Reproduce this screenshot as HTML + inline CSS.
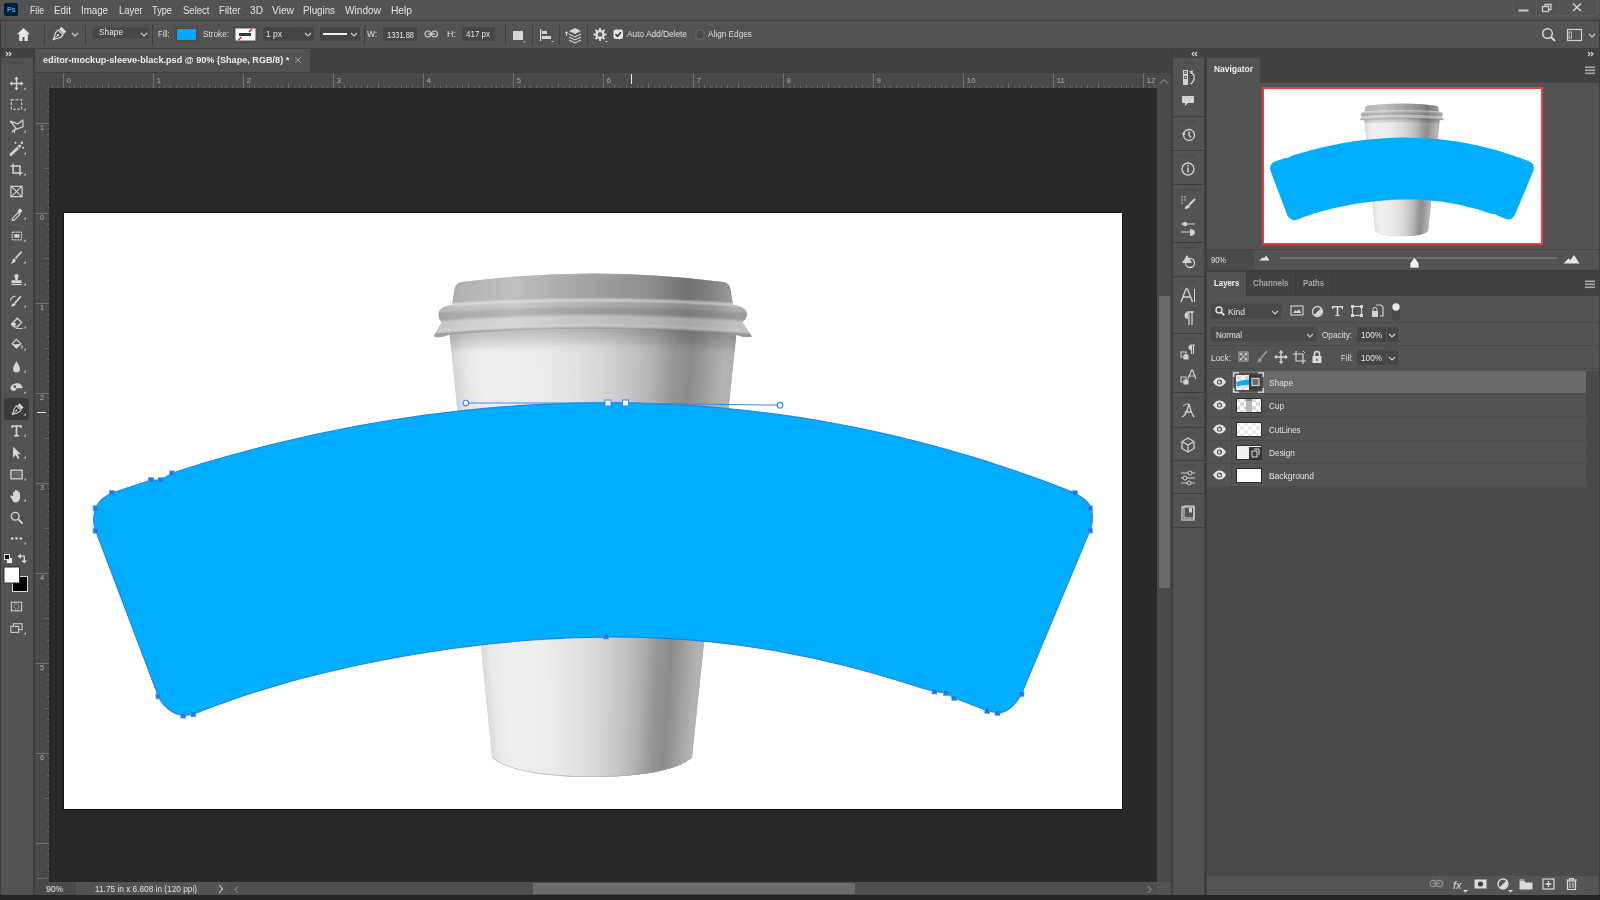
<!DOCTYPE html>
<html><head><meta charset="utf-8">
<style>
*{margin:0;padding:0;box-sizing:border-box}
html,body{width:1600px;height:900px;overflow:hidden;background:#3e3e3e;font-family:"Liberation Sans",sans-serif}
.a{position:absolute}
.t{position:absolute;white-space:nowrap;line-height:1;transform-origin:0 0}
</style></head><body>
<div class="a" style="left:0px;top:0px;width:1600px;height:20px;background:#535353;"></div>
<div class="a" style="left:1px;top:21px;width:1598px;height:27px;background:#535353;"></div>
<div class="a" style="left:1px;top:49px;width:32px;height:9px;background:#424242;"></div>
<div class="a" style="left:1px;top:58px;width:32px;height:837px;background:#535353;"></div>
<div class="a" style="left:35px;top:49px;width:1136px;height:23px;background:#424242;"></div>
<div class="a" style="left:35px;top:49px;width:275px;height:23px;background:#535353;"></div>
<div class="a" style="left:35px;top:73px;width:1122px;height:15px;background:#494949;"></div>
<div class="a" style="left:35px;top:88px;width:14px;height:794px;background:#494949;"></div>
<div class="a" style="left:49px;top:88px;width:1108px;height:794px;background:#282828;"></div>
<div class="a" style="left:1157px;top:73px;width:14px;height:809px;background:#4a4a4a;"></div>
<div class="a" style="left:1159px;top:296px;width:11px;height:292px;background:#6a6a6a;"></div>
<div class="a" style="left:35px;top:882px;width:1136px;height:13px;background:#535353;"></div>
<div class="a" style="left:35px;top:882px;width:41px;height:13px;background:#4a4a4a;"></div>
<div class="a" style="left:228px;top:882px;width:929px;height:13px;background:#4e4e4e;"></div>
<div class="a" style="left:533px;top:883px;width:322px;height:11px;background:#6b6b6b;"></div>
<div class="a" style="left:0px;top:895px;width:1600px;height:5px;background:#242424;"></div>
<div class="a" style="left:1173px;top:49px;width:426px;height:9px;background:#424242;"></div>
<div class="a" style="left:1173px;top:58px;width:31px;height:837px;background:#535353;"></div>
<div class="a" style="left:1207px;top:58px;width:392px;height:25px;background:#424242;"></div>
<div class="a" style="left:1207px;top:58px;width:53px;height:25px;background:#535353;"></div>
<div class="a" style="left:1207px;top:83px;width:392px;height:166px;background:#535353;"></div>
<div class="a" style="left:1207px;top:250px;width:392px;height:20px;background:#535353;"></div>
<div class="a" style="left:1207px;top:250px;width:47px;height:20px;background:#4a4a4a;"></div>
<div class="a" style="left:1207px;top:272px;width:392px;height:24px;background:#424242;"></div>
<div class="a" style="left:1207px;top:272px;width:39px;height:24px;background:#535353;"></div>
<div class="a" style="left:1207px;top:296px;width:392px;height:75px;background:#535353;"></div>
<div class="a" style="left:1207px;top:371px;width:392px;height:505px;background:#4a4a4a;"></div>
<div class="a" style="left:1207px;top:876px;width:392px;height:19px;background:#555555;"></div>
<div class="a" style="left:4px;top:3px;width:14px;height:13px;background:#001e36;border-radius:2px"></div>
<span id="t0" class="t" style="left:6.6px;top:6.45px;font-size:7.5px;color:#31a8ff;font-weight:bold;transform:scaleX(0.9578);">Ps</span>
<span id="t1" class="t" style="left:29.8px;top:4.61px;font-size:10.5px;color:#e4e4e4;transform:scaleX(0.8273);">File</span>
<span id="t2" class="t" style="left:54px;top:4.61px;font-size:10.5px;color:#e4e4e4;transform:scaleX(0.9396);">Edit</span>
<span id="t3" class="t" style="left:81px;top:4.61px;font-size:10.5px;color:#e4e4e4;transform:scaleX(0.9251);">Image</span>
<span id="t4" class="t" style="left:118.5px;top:4.61px;font-size:10.5px;color:#e4e4e4;transform:scaleX(0.8947);">Layer</span>
<span id="t5" class="t" style="left:152px;top:4.61px;font-size:10.5px;color:#e4e4e4;transform:scaleX(0.8785);">Type</span>
<span id="t6" class="t" style="left:182.5px;top:4.61px;font-size:10.5px;color:#e4e4e4;transform:scaleX(0.9079);">Select</span>
<span id="t7" class="t" style="left:218.5px;top:4.61px;font-size:10.5px;color:#e4e4e4;transform:scaleX(0.9210);">Filter</span>
<span id="t8" class="t" style="left:249.5px;top:4.61px;font-size:10.5px;color:#e4e4e4;transform:scaleX(0.9674);">3D</span>
<span id="t9" class="t" style="left:272px;top:4.61px;font-size:10.5px;color:#e4e4e4;transform:scaleX(0.9744);">View</span>
<span id="t10" class="t" style="left:303px;top:4.61px;font-size:10.5px;color:#e4e4e4;transform:scaleX(0.9288);">Plugins</span>
<span id="t11" class="t" style="left:345px;top:4.61px;font-size:10.5px;color:#e4e4e4;transform:scaleX(0.9636);">Window</span>
<span id="t12" class="t" style="left:391px;top:4.61px;font-size:10.5px;color:#e4e4e4;transform:scaleX(0.9718);">Help</span>
<svg class="a" style="left:1512px;top:0px;" width="88" height="18" viewBox="0 0 88 18"><rect x="1.5" y="-2" width="84" height="17.5" rx="2" fill="none" stroke="#5c5c5c"/><line x1="24.5" y1="0" x2="24.5" y2="15" stroke="#5c5c5c"/><line x1="46.5" y1="0" x2="46.5" y2="15" stroke="#5c5c5c"/><rect x="6.5" y="9.5" width="10" height="2" fill="#cfcfcf"/><rect x="30.5" y="6.5" width="6" height="5" fill="none" stroke="#cfcfcf" stroke-width="1.3"/><path d="M33 6.5V4.5h6v5h-2.2" fill="none" stroke="#cfcfcf" stroke-width="1.3"/><path d="M61 3.5l8 7.5M69 3.5l-8 7.5" stroke="#cfcfcf" stroke-width="1.6"/></svg>
<div class="a" style="left:1599px;top:21px;width:1px;height:27px;background:#3b3b3b;"></div>
<div class="a" style="left:0px;top:21px;width:1px;height:874px;background:#3b3b3b;"></div>
<svg class="a" style="left:4px;top:25px;" width="3" height="20" viewBox="0 0 3 20"><rect x="1" y="0" width="1" height="1" fill="#3f3f3f"/><rect x="1" y="2" width="1" height="1" fill="#3f3f3f"/><rect x="1" y="4" width="1" height="1" fill="#3f3f3f"/><rect x="1" y="6" width="1" height="1" fill="#3f3f3f"/><rect x="1" y="8" width="1" height="1" fill="#3f3f3f"/><rect x="1" y="10" width="1" height="1" fill="#3f3f3f"/><rect x="1" y="12" width="1" height="1" fill="#3f3f3f"/><rect x="1" y="14" width="1" height="1" fill="#3f3f3f"/><rect x="1" y="16" width="1" height="1" fill="#3f3f3f"/><rect x="1" y="18" width="1" height="1" fill="#3f3f3f"/></svg>
<svg class="a" style="left:16px;top:27px;" width="15" height="15" viewBox="0 0 15 15"><path d="M7.5 1L1 7.3h2.2V14h3.3V10h2V14h3.3V7.3H14z" fill="#e8e8e8"/></svg>
<div class="a" style="left:44px;top:25px;width:1px;height:20px;background:#3e3e3e;"></div>
<div class="a" style="left:85px;top:25px;width:1px;height:20px;background:#3e3e3e;"></div>
<div class="a" style="left:152px;top:25px;width:1px;height:20px;background:#3e3e3e;"></div>
<svg class="a" style="left:50px;top:26px;" width="17" height="17" viewBox="0 0 17 17"><g transform="translate(8.5 8.5) rotate(45)"><path d="M0 7.5C-1 4.5-3.6 1.8-3.6-0.8V-3H3.6V-0.8C3.6 1.8 1 4.5 0 7.5Z" fill="none" stroke="#dcdcdc" stroke-width="1.2" stroke-linejoin="round"/><path d="M0 7.5V1.5" stroke="#dcdcdc" stroke-width="0.9"/><circle cx="0" cy="0.8" r="1.1" fill="#dcdcdc"/><rect x="-3.3" y="-7.5" width="6.6" height="3.4" fill="#dcdcdc"/></g></svg>
<svg class="a" style="left:71px;top:32px;" width="8" height="5" viewBox="0 0 8 5"><path d="M1 1l3.0 3l3.0 -3" fill="none" stroke="#cfcfcf" stroke-width="1.1"/></svg>
<div class="a" style="left:92px;top:27px;width:58px;height:12px;background:#474747;border:1px solid #4d4d4d;border-radius:2px"></div>
<span id="t13" class="t" style="left:99px;top:28.35px;font-size:8.8px;color:#e6e6e6;transform:scaleX(0.9435);">Shape</span>
<svg class="a" style="left:140px;top:31.5px;" width="8" height="5" viewBox="0 0 8 5"><path d="M1 1l3.0 3l3.0 -3" fill="none" stroke="#cfcfcf" stroke-width="1.1"/></svg>
<span id="t14" class="t" style="left:158.4px;top:30.47px;font-size:8.3px;color:#dedede;transform:scaleX(0.8988);">Fill:</span>
<div class="a" style="left:174px;top:26px;width:25px;height:17px;background:none;border:1px solid #4a4a4a"></div>
<div class="a" style="left:176px;top:28px;width:21px;height:13px;background:#00aaff;border:1px solid #5a4038"></div>
<span id="t15" class="t" style="left:203px;top:30.47px;font-size:8.3px;color:#dedede;transform:scaleX(0.9887);">Stroke:</span>
<div class="a" style="left:233px;top:26px;width:25px;height:17px;background:none;border:1px solid #4a4a4a"></div>
<svg class="a" style="left:235px;top:28px;" width="21" height="13" viewBox="0 0 21 13"><rect x="0" y="0" width="21" height="13" fill="#fff" stroke="#5a4038"/><rect x="4" y="5" width="12" height="3" fill="#383838"/><path d="M14 4l3-3M3.5 12l3-3" stroke="#e8262b" stroke-width="1.6"/></svg>
<div class="a" style="left:263px;top:27px;width:39px;height:14px;background:#454545;border-radius:2px"></div>
<div class="a" style="left:302px;top:27px;width:12px;height:14px;background:#454545;border-radius:1px"></div>
<span id="t16" class="t" style="left:266px;top:30.35px;font-size:8.8px;color:#e6e6e6;transform:scaleX(0.9615);">1 px</span>
<svg class="a" style="left:304px;top:32px;" width="8" height="5" viewBox="0 0 8 5"><path d="M1 1l3.0 3l3.0 -3" fill="none" stroke="#cfcfcf" stroke-width="1.1"/></svg>
<div class="a" style="left:320px;top:27px;width:40px;height:14px;background:#454545;border-radius:2px"></div>
<div class="a" style="left:323px;top:33px;width:24px;height:2px;background:#f0f0f0;"></div>
<svg class="a" style="left:350px;top:31.5px;" width="8" height="5" viewBox="0 0 8 5"><path d="M1 1l3.0 3l3.0 -3" fill="none" stroke="#cfcfcf" stroke-width="1.1"/></svg>
<div class="a" style="left:364px;top:25px;width:1px;height:20px;background:#3e3e3e;"></div>
<span id="t17" class="t" style="left:367px;top:30.47px;font-size:8.3px;color:#dedede;">W:</span>
<div class="a" style="left:383px;top:27px;width:34px;height:14px;background:#454545;border-radius:2px"></div>
<span id="t18" class="t" style="left:387px;top:30.60px;font-size:8.5px;color:#e6e6e6;transform:scaleX(0.8785);">1331.88</span>
<svg class="a" style="left:424px;top:30px;" width="15" height="8" viewBox="0 0 15 8"><rect x="1" y="1" width="6" height="6" rx="3" fill="none" stroke="#d0d0d0" stroke-width="1.2"/><rect x="7.5" y="1" width="6" height="6" rx="3" fill="none" stroke="#d0d0d0" stroke-width="1.2"/><line x1="4" y1="4" x2="11" y2="4" stroke="#d0d0d0" stroke-width="1.2"/></svg>
<span id="t19" class="t" style="left:447px;top:30.47px;font-size:8.3px;color:#dedede;transform:scaleX(1.0827);">H:</span>
<div class="a" style="left:462px;top:27px;width:33px;height:14px;background:#454545;border-radius:2px"></div>
<span id="t20" class="t" style="left:466px;top:30.35px;font-size:8.8px;color:#e6e6e6;transform:scaleX(0.9083);">417 px</span>
<div class="a" style="left:505px;top:25px;width:1px;height:20px;background:#3e3e3e;"></div>
<svg class="a" style="left:511px;top:29px;" width="16" height="14" viewBox="0 0 16 14"><rect x="2" y="2" width="10" height="9" fill="#d6d6d6"/><path d="M12 12.5h3l-1.5 1.3z" fill="#d6d6d6"/></svg>
<div class="a" style="left:532px;top:25px;width:1px;height:20px;background:#3e3e3e;"></div>
<svg class="a" style="left:538px;top:28px;" width="17" height="15" viewBox="0 0 17 15"><rect x="2" y="1" width="1.2" height="12" fill="#d6d6d6"/><rect x="4" y="3" width="5" height="3" fill="#d6d6d6"/><rect x="4" y="8" width="9" height="3" fill="#d6d6d6"/><path d="M13 13h3l-1.5 1.3z" fill="#d6d6d6"/></svg>
<div class="a" style="left:559px;top:25px;width:1px;height:20px;background:#3e3e3e;"></div>
<svg class="a" style="left:564px;top:27px;" width="19" height="17" viewBox="0 0 19 17"><path d="M2.5 9V5M1 6.5l1.5-2 1.5 2" stroke="#d6d6d6" fill="none" stroke-width="1"/><path d="M11 1l6 3-6 3-6-3z" fill="#d6d6d6"/><path d="M5 7l6 3 6-3M5 10l6 3 6-3M5 13l6 3 6-3" fill="none" stroke="#d6d6d6" stroke-width="1.1"/></svg>
<div class="a" style="left:587px;top:25px;width:1px;height:20px;background:#3e3e3e;"></div>
<svg class="a" style="left:593px;top:27px;" width="16" height="16" viewBox="0 0 16 16"><circle cx="7" cy="7.5" r="3.5" fill="none" stroke="#dadada" stroke-width="2.4"/><rect x="6" y="1" width="2" height="3" fill="#dadada" transform="rotate(0 7 7.5)"/><rect x="6" y="1" width="2" height="3" fill="#dadada" transform="rotate(45 7 7.5)"/><rect x="6" y="1" width="2" height="3" fill="#dadada" transform="rotate(90 7 7.5)"/><rect x="6" y="1" width="2" height="3" fill="#dadada" transform="rotate(135 7 7.5)"/><rect x="6" y="1" width="2" height="3" fill="#dadada" transform="rotate(180 7 7.5)"/><rect x="6" y="1" width="2" height="3" fill="#dadada" transform="rotate(225 7 7.5)"/><rect x="6" y="1" width="2" height="3" fill="#dadada" transform="rotate(270 7 7.5)"/><rect x="6" y="1" width="2" height="3" fill="#dadada" transform="rotate(315 7 7.5)"/><path d="M12 14h3l-1.5 1.3z" fill="#dadada"/></svg>
<svg class="a" style="left:613px;top:29px;" width="11" height="11" viewBox="0 0 11 11"><rect x="0.5" y="0.5" width="9.5" height="9.5" rx="2" fill="#e2e2e2"/><path d="M2.5 5.3l2 2 3.5-4" fill="none" stroke="#333" stroke-width="1.5"/></svg>
<span id="t21" class="t" style="left:627px;top:30.47px;font-size:8.3px;color:#dedede;">Auto Add/Delete</span>
<svg class="a" style="left:695px;top:29px;" width="10" height="11" viewBox="0 0 10 11"><rect x="1" y="1" width="8" height="9" rx="2" fill="#484848" stroke="#6a6a6a"/></svg>
<span id="t22" class="t" style="left:708px;top:30.47px;font-size:8.3px;color:#dedede;transform:scaleX(0.9936);">Align Edges</span>
<svg class="a" style="left:1541px;top:27px;" width="16" height="16" viewBox="0 0 16 16"><circle cx="6.5" cy="6.5" r="4.8" fill="none" stroke="#dcdcdc" stroke-width="1.4"/><path d="M10 10l4 4" stroke="#dcdcdc" stroke-width="1.8"/></svg>
<svg class="a" style="left:1566px;top:28px;" width="17" height="14" viewBox="0 0 17 14"><rect x="1.5" y="1.5" width="14" height="11" fill="none" stroke="#d0d0d0" stroke-width="1.2"/><rect x="3" y="4" width="2.5" height="6" fill="none" stroke="#d0d0d0" stroke-width="0.8"/></svg>
<svg class="a" style="left:1588px;top:33px;" width="8" height="5" viewBox="0 0 8 5"><path d="M1 1l3.0 3l3.0 -3" fill="none" stroke="#cfcfcf" stroke-width="1.1"/></svg>
<svg class="a" style="left:4.5px;top:50.5px;" width="8" height="6" viewBox="0 0 8 6"><path d="M1 1l2 2-2 2M4 1l2 2-2 2" fill="none" stroke="#d8d8d8" stroke-width="1.1"/></svg>
<svg class="a" style="left:9px;top:61px;" width="16" height="3" viewBox="0 0 16 3"><rect x="0" y="0.5" width="1" height="2" fill="#464646"/><rect x="2" y="0.5" width="1" height="2" fill="#464646"/><rect x="4" y="0.5" width="1" height="2" fill="#464646"/><rect x="6" y="0.5" width="1" height="2" fill="#464646"/><rect x="8" y="0.5" width="1" height="2" fill="#464646"/><rect x="10" y="0.5" width="1" height="2" fill="#464646"/><rect x="12" y="0.5" width="1" height="2" fill="#464646"/><rect x="14" y="0.5" width="1" height="2" fill="#464646"/></svg>
<div class="a" style="left:4px;top:398px;width:25px;height:22px;background:#3a3a3a;border-radius:2px"></div>
<svg class="a" style="left:8px;top:75px;" width="19" height="17" viewBox="0 0 19 17"><g transform="translate(8.5 8.5) scale(0.86) translate(-8 -8)"><path d="M8 1v14M1 8h14" stroke="#d6d6d6" stroke-width="1.6"/><path d="M8 0l2.5 3h-5zM8 16l2.5-3h-5zM0 8l3-2.5v5zM16 8l-3-2.5v5z" fill="#d6d6d6"/><path d="M16 15h3v-3z" fill="#bdbdbd"/></g></svg>
<svg class="a" style="left:8px;top:96px;" width="19" height="17" viewBox="0 0 19 17"><g transform="translate(8.5 8.5) scale(0.86) translate(-8 -8)"><rect x="2" y="2.5" width="12" height="11" fill="none" stroke="#d6d6d6" stroke-width="1.3" stroke-dasharray="3 2"/><path d="M16 15h3v-3z" fill="#bdbdbd"/></g></svg>
<svg class="a" style="left:8px;top:118px;" width="19" height="17" viewBox="0 0 19 17"><g transform="translate(8.5 8.5) scale(0.86) translate(-8 -8)"><path d="M0.8 1.8L9.4 5.1 15.3 0.4 15.6 8.3 8.2 11.1Z" fill="none" stroke="#d6d6d6" stroke-width="1.4" stroke-linejoin="round"/><path d="M6.8 10.3L2.5 14.6M6.8 10.3L5.1 15.6" stroke="#d6d6d6" stroke-width="1.3"/><path d="M16 15h3v-3z" fill="#bdbdbd"/></g></svg>
<svg class="a" style="left:8px;top:140px;" width="19" height="17" viewBox="0 0 19 17"><g transform="translate(8.5 8.5) scale(0.86) translate(-8 -8)"><path d="M1.5 15L12 5" stroke="#d6d6d6" stroke-width="3.2" stroke-linecap="round"/><path d="M9.6 7.5l1.5-1.5" stroke="#535353" stroke-width="1.2"/><circle cx="6.8" cy="1.3" r="1.2" fill="#d6d6d6"/><circle cx="14.2" cy="1.3" r="1.4" fill="#d6d6d6"/><circle cx="15.8" cy="7.2" r="1.2" fill="#d6d6d6"/><path d="M16 15h3v-3z" fill="#bdbdbd"/></g></svg>
<svg class="a" style="left:8px;top:161px;" width="19" height="17" viewBox="0 0 19 17"><g transform="translate(8.5 8.5) scale(0.86) translate(-8 -8)"><path d="M4 1v11h11M1 4h11v11" fill="none" stroke="#d6d6d6" stroke-width="1.7"/><path d="M16 15h3v-3z" fill="#bdbdbd"/></g></svg>
<svg class="a" style="left:8px;top:183px;" width="19" height="17" viewBox="0 0 19 17"><g transform="translate(8.5 8.5) scale(0.86) translate(-8 -8)"><rect x="1.5" y="2" width="13" height="12" fill="none" stroke="#d6d6d6" stroke-width="1.4"/><path d="M2 2l12 12M14 2L2 14" stroke="#d6d6d6" stroke-width="1.2"/></g></svg>
<svg class="a" style="left:8px;top:205px;" width="19" height="17" viewBox="0 0 19 17"><g transform="translate(8.5 8.5) scale(0.86) translate(-8 -8)"><path d="M3 14l7-7 2 2-7 7H3z" fill="none" stroke="#d6d6d6" stroke-width="1.3"/><path d="M9 5l3-3 3 3-3 3z" fill="#d6d6d6"/><path d="M16 15h3v-3z" fill="#bdbdbd"/></g></svg>
<svg class="a" style="left:8px;top:227px;" width="19" height="17" viewBox="0 0 19 17"><g transform="translate(8.5 8.5) scale(0.86) translate(-8 -8)"><rect x="3" y="4" width="11" height="9" rx="1" fill="none" stroke="#d6d6d6" stroke-width="1.4" stroke-dasharray="2 1"/><rect x="5.5" y="6.5" width="6" height="4" fill="#d6d6d6"/><path d="M16 15h3v-3z" fill="#bdbdbd"/></g></svg>
<svg class="a" style="left:8px;top:249px;" width="19" height="17" viewBox="0 0 19 17"><g transform="translate(8.5 8.5) scale(0.86) translate(-8 -8)"><path d="M14 1L7 9" stroke="#d6d6d6" stroke-width="2"/><path d="M6 9c-2 0-3 2-3 4l-2 2c3 0 6-1 6-4z" fill="#d6d6d6"/><path d="M16 15h3v-3z" fill="#bdbdbd"/></g></svg>
<svg class="a" style="left:8px;top:271px;" width="19" height="17" viewBox="0 0 19 17"><g transform="translate(8.5 8.5) scale(0.86) translate(-8 -8)"><circle cx="8" cy="4" r="2.5" fill="#d6d6d6"/><rect x="6.5" y="5" width="3" height="4" fill="#d6d6d6"/><rect x="2" y="9" width="12" height="3" rx="1" fill="#d6d6d6"/><rect x="2" y="13" width="12" height="1.5" fill="#d6d6d6"/><path d="M16 15h3v-3z" fill="#bdbdbd"/></g></svg>
<svg class="a" style="left:8px;top:293px;" width="19" height="17" viewBox="0 0 19 17"><g transform="translate(8.5 8.5) scale(0.86) translate(-8 -8)"><path d="M13 2L6 10" stroke="#d6d6d6" stroke-width="2"/><path d="M5 10c-2 0-3 2-3 4 2 0 5-1 5-3z" fill="#d6d6d6"/><path d="M1 7a6 6 0 0 1 6-5" fill="none" stroke="#d6d6d6" stroke-width="1.2"/><path d="M16 15h3v-3z" fill="#bdbdbd"/></g></svg>
<svg class="a" style="left:8px;top:314px;" width="19" height="17" viewBox="0 0 19 17"><g transform="translate(8.5 8.5) scale(0.86) translate(-8 -8)"><path d="M2 10l7-7 5 5-5 5H5z" fill="none" stroke="#d6d6d6" stroke-width="1.4"/><path d="M2 10l3 3 3-3-3-3z" fill="#d6d6d6"/><path d="M7 15h8" stroke="#d6d6d6" stroke-width="1"/><path d="M16 15h3v-3z" fill="#bdbdbd"/></g></svg>
<svg class="a" style="left:8px;top:336px;" width="19" height="17" viewBox="0 0 19 17"><g transform="translate(8.5 8.5) scale(0.86) translate(-8 -8)"><path d="M3 7l5-5 5 5-5 5z" fill="none" stroke="#d6d6d6" stroke-width="1.4"/><path d="M4 8l4 4 5-5z" fill="#d6d6d6"/><path d="M14 9c1 2 1 3 0 4" stroke="#d6d6d6" stroke-width="1.5"/><path d="M16 15h3v-3z" fill="#bdbdbd"/></g></svg>
<svg class="a" style="left:8px;top:358px;" width="19" height="17" viewBox="0 0 19 17"><g transform="translate(8.5 8.5) scale(0.86) translate(-8 -8)"><path d="M8 2c-3 5-4 7-4 9a4 4 0 0 0 8 0c0-2-1-4-4-9z" fill="#d6d6d6"/><path d="M16 15h3v-3z" fill="#bdbdbd"/></g></svg>
<svg class="a" style="left:8px;top:379px;" width="19" height="17" viewBox="0 0 19 17"><g transform="translate(8.5 8.5) scale(0.86) translate(-8 -8)"><path d="M1 9c0-4 4-6 8-6 4 0 6 3 6 6h-7l-2 3c-3 0-5-1-5-3z" fill="#d6d6d6"/><circle cx="6" cy="7" r="1.5" fill="#535353"/><path d="M16 15h3v-3z" fill="#bdbdbd"/></g></svg>
<svg class="a" style="left:8px;top:401px;" width="19" height="17" viewBox="0 0 19 17"><g transform="translate(8.5 8.5) scale(0.86) translate(-8 -8)"><g transform="translate(8.5 8.5) rotate(45)"><path d="M0 7.5C-1 4.5-3.6 1.8-3.6-0.8V-3H3.6V-0.8C3.6 1.8 1 4.5 0 7.5Z" fill="none" stroke="#d6d6d6" stroke-width="1.2" stroke-linejoin="round"/><path d="M0 7.5V1.5" stroke="#d6d6d6" stroke-width="0.9"/><circle cx="0" cy="0.8" r="1.1" fill="#d6d6d6"/><rect x="-3.3" y="-7.5" width="6.6" height="3.4" fill="#d6d6d6"/></g><path d="M16 15h3v-3z" fill="#bdbdbd"/></g></svg>
<svg class="a" style="left:8px;top:422px;" width="19" height="17" viewBox="0 0 19 17"><g transform="translate(8.5 8.5) scale(0.86) translate(-8 -8)"><path d="M2 2h12v3h-1.5l-.5-1.5H9V13l2 .5V15H5v-1.5l2-.5V3.5H4L3.5 5H2z" fill="#d6d6d6"/><path d="M16 15h3v-3z" fill="#bdbdbd"/></g></svg>
<svg class="a" style="left:8px;top:444px;" width="19" height="17" viewBox="0 0 19 17"><g transform="translate(8.5 8.5) scale(0.86) translate(-8 -8)"><path d="M4 1v13l3-3 2.5 4.5 2-1-2.5-4.5h4z" fill="#d6d6d6"/><path d="M16 15h3v-3z" fill="#bdbdbd"/></g></svg>
<svg class="a" style="left:8px;top:466px;" width="19" height="17" viewBox="0 0 19 17"><g transform="translate(8.5 8.5) scale(0.86) translate(-8 -8)"><rect x="1.5" y="3" width="13" height="10" fill="none" stroke="#d6d6d6" stroke-width="1.5"/><rect x="3" y="4.5" width="10" height="7" fill="#6a6a6a"/><path d="M16 15h3v-3z" fill="#bdbdbd"/></g></svg>
<svg class="a" style="left:8px;top:487px;" width="19" height="17" viewBox="0 0 19 17"><g transform="translate(8.5 8.5) scale(0.86) translate(-8 -8)"><path d="M4 9V4.5a1 1 0 0 1 2 0V8V2.5a1 1 0 0 1 2 0V8V3a1 1 0 0 1 2 0v5V5a1 1 0 0 1 2 0v6c0 3-2 5-5 5-2 0-3-1-4-3L1 9.5a1 1 0 0 1 1.8-1z" fill="#d6d6d6"/><path d="M16 15h3v-3z" fill="#bdbdbd"/></g></svg>
<svg class="a" style="left:8px;top:509px;" width="19" height="17" viewBox="0 0 19 17"><g transform="translate(8.5 8.5) scale(0.86) translate(-8 -8)"><circle cx="6.5" cy="6.5" r="4.5" fill="none" stroke="#d6d6d6" stroke-width="1.6"/><path d="M10 10l5 5" stroke="#d6d6d6" stroke-width="2"/></g></svg>
<svg class="a" style="left:8px;top:530px;" width="19" height="17" viewBox="0 0 19 17"><g transform="translate(8.5 8.5) scale(0.86) translate(-8 -8)"><circle cx="3" cy="8" r="1.5" fill="#d6d6d6"/><circle cx="8" cy="8" r="1.5" fill="#d6d6d6"/><circle cx="13" cy="8" r="1.5" fill="#d6d6d6"/><path d="M16 15h3v-3z" fill="#bdbdbd"/></g></svg>
<svg class="a" style="left:8px;top:598px;" width="19" height="17" viewBox="0 0 19 17"><g transform="translate(8.5 8.5) scale(0.86) translate(-8 -8)"><rect x="2" y="3" width="12" height="10" fill="none" stroke="#d6d6d6" stroke-width="1.2"/><circle cx="8" cy="8" r="3" fill="none" stroke="#d6d6d6" stroke-width="1" stroke-dasharray="1.5 1"/></g></svg>
<svg class="a" style="left:8px;top:620px;" width="19" height="17" viewBox="0 0 19 17"><g transform="translate(8.5 8.5) scale(0.86) translate(-8 -8)"><rect x="1.5" y="5.5" width="9" height="7" fill="none" stroke="#d6d6d6" stroke-width="1.2"/><path d="M4.5 5.5V2.5h10v7h-4" fill="none" stroke="#d6d6d6" stroke-width="1.2"/><path d="M16 15h3v-3z" fill="#bdbdbd"/></g></svg>
<svg class="a" style="left:0px;top:550px;" width="34" height="45" viewBox="0 0 34 45"><rect x="6.5" y="7.5" width="6" height="6" fill="#e8e8e8" stroke="#3a3a3a" stroke-width="0.6"/><rect x="4.5" y="4.5" width="5" height="5" fill="#111" stroke="#e0e0e0" stroke-width="1"/><path d="M20 6.2h4.3v5" fill="none" stroke="#dcdcdc" stroke-width="1.3"/><path d="M17.6 6.2l3.2-2.8v5.6z" fill="#dcdcdc"/><path d="M24.3 13.6l-2.9-3.2h5.8z" fill="#dcdcdc"/><rect x="12.5" y="26.5" width="15" height="15" fill="#000" stroke="#d8d8d8" stroke-width="1"/><rect x="4" y="17" width="15.5" height="16" fill="#fff" stroke="#2e2e2e" stroke-width="1"/></svg>
<span id="t23" class="t" style="left:43px;top:56.18px;font-size:9px;color:#ececec;font-weight:bold;transform:scaleX(1.0121);">editor-mockup-sleeve-black.psd @ 90% (Shape, RGB/8) *</span>
<svg class="a" style="left:294px;top:56px;" width="8" height="8" viewBox="0 0 8 8"><path d="M1 1l6 6M7 1l-6 6" stroke="#9a9a9a" stroke-width="1"/></svg>
<svg class="a" style="left:35px;top:73px;" width="1122" height="15" viewBox="0 0 1122 15"><line x1="17.50" y1="12" x2="17.50" y2="15" stroke="#6a6a6a" stroke-width="1"/><line x1="22.50" y1="13" x2="22.50" y2="15" stroke="#6a6a6a" stroke-width="1"/><line x1="28.50" y1="0.5" x2="28.50" y2="15" stroke="#727272" stroke-width="1"/><line x1="34.50" y1="13" x2="34.50" y2="15" stroke="#6a6a6a" stroke-width="1"/><line x1="39.50" y1="12" x2="39.50" y2="15" stroke="#6a6a6a" stroke-width="1"/><line x1="45.50" y1="13" x2="45.50" y2="15" stroke="#6a6a6a" stroke-width="1"/><line x1="51.50" y1="12" x2="51.50" y2="15" stroke="#6a6a6a" stroke-width="1"/><line x1="56.50" y1="13" x2="56.50" y2="15" stroke="#6a6a6a" stroke-width="1"/><line x1="62.50" y1="12" x2="62.50" y2="15" stroke="#6a6a6a" stroke-width="1"/><line x1="67.50" y1="13" x2="67.50" y2="15" stroke="#6a6a6a" stroke-width="1"/><line x1="73.50" y1="10" x2="73.50" y2="15" stroke="#6a6a6a" stroke-width="1"/><line x1="79.50" y1="13" x2="79.50" y2="15" stroke="#6a6a6a" stroke-width="1"/><line x1="84.50" y1="12" x2="84.50" y2="15" stroke="#6a6a6a" stroke-width="1"/><line x1="90.50" y1="13" x2="90.50" y2="15" stroke="#6a6a6a" stroke-width="1"/><line x1="96.50" y1="12" x2="96.50" y2="15" stroke="#6a6a6a" stroke-width="1"/><line x1="101.50" y1="13" x2="101.50" y2="15" stroke="#6a6a6a" stroke-width="1"/><line x1="107.50" y1="12" x2="107.50" y2="15" stroke="#6a6a6a" stroke-width="1"/><line x1="112.50" y1="13" x2="112.50" y2="15" stroke="#6a6a6a" stroke-width="1"/><line x1="118.50" y1="0.5" x2="118.50" y2="15" stroke="#727272" stroke-width="1"/><line x1="124.50" y1="13" x2="124.50" y2="15" stroke="#6a6a6a" stroke-width="1"/><line x1="129.50" y1="12" x2="129.50" y2="15" stroke="#6a6a6a" stroke-width="1"/><line x1="135.50" y1="13" x2="135.50" y2="15" stroke="#6a6a6a" stroke-width="1"/><line x1="141.50" y1="12" x2="141.50" y2="15" stroke="#6a6a6a" stroke-width="1"/><line x1="146.50" y1="13" x2="146.50" y2="15" stroke="#6a6a6a" stroke-width="1"/><line x1="152.50" y1="12" x2="152.50" y2="15" stroke="#6a6a6a" stroke-width="1"/><line x1="157.50" y1="13" x2="157.50" y2="15" stroke="#6a6a6a" stroke-width="1"/><line x1="163.50" y1="10" x2="163.50" y2="15" stroke="#6a6a6a" stroke-width="1"/><line x1="169.50" y1="13" x2="169.50" y2="15" stroke="#6a6a6a" stroke-width="1"/><line x1="174.50" y1="12" x2="174.50" y2="15" stroke="#6a6a6a" stroke-width="1"/><line x1="180.50" y1="13" x2="180.50" y2="15" stroke="#6a6a6a" stroke-width="1"/><line x1="186.50" y1="12" x2="186.50" y2="15" stroke="#6a6a6a" stroke-width="1"/><line x1="191.50" y1="13" x2="191.50" y2="15" stroke="#6a6a6a" stroke-width="1"/><line x1="197.50" y1="12" x2="197.50" y2="15" stroke="#6a6a6a" stroke-width="1"/><line x1="202.50" y1="13" x2="202.50" y2="15" stroke="#6a6a6a" stroke-width="1"/><line x1="208.50" y1="0.5" x2="208.50" y2="15" stroke="#727272" stroke-width="1"/><line x1="214.50" y1="13" x2="214.50" y2="15" stroke="#6a6a6a" stroke-width="1"/><line x1="219.50" y1="12" x2="219.50" y2="15" stroke="#6a6a6a" stroke-width="1"/><line x1="225.50" y1="13" x2="225.50" y2="15" stroke="#6a6a6a" stroke-width="1"/><line x1="231.50" y1="12" x2="231.50" y2="15" stroke="#6a6a6a" stroke-width="1"/><line x1="236.50" y1="13" x2="236.50" y2="15" stroke="#6a6a6a" stroke-width="1"/><line x1="242.50" y1="12" x2="242.50" y2="15" stroke="#6a6a6a" stroke-width="1"/><line x1="247.50" y1="13" x2="247.50" y2="15" stroke="#6a6a6a" stroke-width="1"/><line x1="253.50" y1="10" x2="253.50" y2="15" stroke="#6a6a6a" stroke-width="1"/><line x1="259.50" y1="13" x2="259.50" y2="15" stroke="#6a6a6a" stroke-width="1"/><line x1="264.50" y1="12" x2="264.50" y2="15" stroke="#6a6a6a" stroke-width="1"/><line x1="270.50" y1="13" x2="270.50" y2="15" stroke="#6a6a6a" stroke-width="1"/><line x1="276.50" y1="12" x2="276.50" y2="15" stroke="#6a6a6a" stroke-width="1"/><line x1="281.50" y1="13" x2="281.50" y2="15" stroke="#6a6a6a" stroke-width="1"/><line x1="287.50" y1="12" x2="287.50" y2="15" stroke="#6a6a6a" stroke-width="1"/><line x1="292.50" y1="13" x2="292.50" y2="15" stroke="#6a6a6a" stroke-width="1"/><line x1="298.50" y1="0.5" x2="298.50" y2="15" stroke="#727272" stroke-width="1"/><line x1="304.50" y1="13" x2="304.50" y2="15" stroke="#6a6a6a" stroke-width="1"/><line x1="309.50" y1="12" x2="309.50" y2="15" stroke="#6a6a6a" stroke-width="1"/><line x1="315.50" y1="13" x2="315.50" y2="15" stroke="#6a6a6a" stroke-width="1"/><line x1="321.50" y1="12" x2="321.50" y2="15" stroke="#6a6a6a" stroke-width="1"/><line x1="326.50" y1="13" x2="326.50" y2="15" stroke="#6a6a6a" stroke-width="1"/><line x1="332.50" y1="12" x2="332.50" y2="15" stroke="#6a6a6a" stroke-width="1"/><line x1="337.50" y1="13" x2="337.50" y2="15" stroke="#6a6a6a" stroke-width="1"/><line x1="343.50" y1="10" x2="343.50" y2="15" stroke="#6a6a6a" stroke-width="1"/><line x1="349.50" y1="13" x2="349.50" y2="15" stroke="#6a6a6a" stroke-width="1"/><line x1="354.50" y1="12" x2="354.50" y2="15" stroke="#6a6a6a" stroke-width="1"/><line x1="360.50" y1="13" x2="360.50" y2="15" stroke="#6a6a6a" stroke-width="1"/><line x1="366.50" y1="12" x2="366.50" y2="15" stroke="#6a6a6a" stroke-width="1"/><line x1="371.50" y1="13" x2="371.50" y2="15" stroke="#6a6a6a" stroke-width="1"/><line x1="377.50" y1="12" x2="377.50" y2="15" stroke="#6a6a6a" stroke-width="1"/><line x1="382.50" y1="13" x2="382.50" y2="15" stroke="#6a6a6a" stroke-width="1"/><line x1="388.50" y1="0.5" x2="388.50" y2="15" stroke="#727272" stroke-width="1"/><line x1="394.50" y1="13" x2="394.50" y2="15" stroke="#6a6a6a" stroke-width="1"/><line x1="399.50" y1="12" x2="399.50" y2="15" stroke="#6a6a6a" stroke-width="1"/><line x1="405.50" y1="13" x2="405.50" y2="15" stroke="#6a6a6a" stroke-width="1"/><line x1="411.50" y1="12" x2="411.50" y2="15" stroke="#6a6a6a" stroke-width="1"/><line x1="416.50" y1="13" x2="416.50" y2="15" stroke="#6a6a6a" stroke-width="1"/><line x1="422.50" y1="12" x2="422.50" y2="15" stroke="#6a6a6a" stroke-width="1"/><line x1="427.50" y1="13" x2="427.50" y2="15" stroke="#6a6a6a" stroke-width="1"/><line x1="433.50" y1="10" x2="433.50" y2="15" stroke="#6a6a6a" stroke-width="1"/><line x1="439.50" y1="13" x2="439.50" y2="15" stroke="#6a6a6a" stroke-width="1"/><line x1="444.50" y1="12" x2="444.50" y2="15" stroke="#6a6a6a" stroke-width="1"/><line x1="450.50" y1="13" x2="450.50" y2="15" stroke="#6a6a6a" stroke-width="1"/><line x1="456.50" y1="12" x2="456.50" y2="15" stroke="#6a6a6a" stroke-width="1"/><line x1="461.50" y1="13" x2="461.50" y2="15" stroke="#6a6a6a" stroke-width="1"/><line x1="467.50" y1="12" x2="467.50" y2="15" stroke="#6a6a6a" stroke-width="1"/><line x1="472.50" y1="13" x2="472.50" y2="15" stroke="#6a6a6a" stroke-width="1"/><line x1="478.50" y1="0.5" x2="478.50" y2="15" stroke="#727272" stroke-width="1"/><line x1="484.50" y1="13" x2="484.50" y2="15" stroke="#6a6a6a" stroke-width="1"/><line x1="489.50" y1="12" x2="489.50" y2="15" stroke="#6a6a6a" stroke-width="1"/><line x1="495.50" y1="13" x2="495.50" y2="15" stroke="#6a6a6a" stroke-width="1"/><line x1="501.50" y1="12" x2="501.50" y2="15" stroke="#6a6a6a" stroke-width="1"/><line x1="506.50" y1="13" x2="506.50" y2="15" stroke="#6a6a6a" stroke-width="1"/><line x1="512.50" y1="12" x2="512.50" y2="15" stroke="#6a6a6a" stroke-width="1"/><line x1="517.50" y1="13" x2="517.50" y2="15" stroke="#6a6a6a" stroke-width="1"/><line x1="523.50" y1="10" x2="523.50" y2="15" stroke="#6a6a6a" stroke-width="1"/><line x1="529.50" y1="13" x2="529.50" y2="15" stroke="#6a6a6a" stroke-width="1"/><line x1="534.50" y1="12" x2="534.50" y2="15" stroke="#6a6a6a" stroke-width="1"/><line x1="540.50" y1="13" x2="540.50" y2="15" stroke="#6a6a6a" stroke-width="1"/><line x1="546.50" y1="12" x2="546.50" y2="15" stroke="#6a6a6a" stroke-width="1"/><line x1="551.50" y1="13" x2="551.50" y2="15" stroke="#6a6a6a" stroke-width="1"/><line x1="557.50" y1="12" x2="557.50" y2="15" stroke="#6a6a6a" stroke-width="1"/><line x1="562.50" y1="13" x2="562.50" y2="15" stroke="#6a6a6a" stroke-width="1"/><line x1="568.50" y1="0.5" x2="568.50" y2="15" stroke="#727272" stroke-width="1"/><line x1="574.50" y1="13" x2="574.50" y2="15" stroke="#6a6a6a" stroke-width="1"/><line x1="579.50" y1="12" x2="579.50" y2="15" stroke="#6a6a6a" stroke-width="1"/><line x1="585.50" y1="13" x2="585.50" y2="15" stroke="#6a6a6a" stroke-width="1"/><line x1="591.50" y1="12" x2="591.50" y2="15" stroke="#6a6a6a" stroke-width="1"/><line x1="596.50" y1="13" x2="596.50" y2="15" stroke="#6a6a6a" stroke-width="1"/><line x1="602.50" y1="12" x2="602.50" y2="15" stroke="#6a6a6a" stroke-width="1"/><line x1="607.50" y1="13" x2="607.50" y2="15" stroke="#6a6a6a" stroke-width="1"/><line x1="613.50" y1="10" x2="613.50" y2="15" stroke="#6a6a6a" stroke-width="1"/><line x1="619.50" y1="13" x2="619.50" y2="15" stroke="#6a6a6a" stroke-width="1"/><line x1="624.50" y1="12" x2="624.50" y2="15" stroke="#6a6a6a" stroke-width="1"/><line x1="630.50" y1="13" x2="630.50" y2="15" stroke="#6a6a6a" stroke-width="1"/><line x1="636.50" y1="12" x2="636.50" y2="15" stroke="#6a6a6a" stroke-width="1"/><line x1="641.50" y1="13" x2="641.50" y2="15" stroke="#6a6a6a" stroke-width="1"/><line x1="647.50" y1="12" x2="647.50" y2="15" stroke="#6a6a6a" stroke-width="1"/><line x1="652.50" y1="13" x2="652.50" y2="15" stroke="#6a6a6a" stroke-width="1"/><line x1="658.50" y1="0.5" x2="658.50" y2="15" stroke="#727272" stroke-width="1"/><line x1="664.50" y1="13" x2="664.50" y2="15" stroke="#6a6a6a" stroke-width="1"/><line x1="669.50" y1="12" x2="669.50" y2="15" stroke="#6a6a6a" stroke-width="1"/><line x1="675.50" y1="13" x2="675.50" y2="15" stroke="#6a6a6a" stroke-width="1"/><line x1="681.50" y1="12" x2="681.50" y2="15" stroke="#6a6a6a" stroke-width="1"/><line x1="686.50" y1="13" x2="686.50" y2="15" stroke="#6a6a6a" stroke-width="1"/><line x1="692.50" y1="12" x2="692.50" y2="15" stroke="#6a6a6a" stroke-width="1"/><line x1="697.50" y1="13" x2="697.50" y2="15" stroke="#6a6a6a" stroke-width="1"/><line x1="703.50" y1="10" x2="703.50" y2="15" stroke="#6a6a6a" stroke-width="1"/><line x1="709.50" y1="13" x2="709.50" y2="15" stroke="#6a6a6a" stroke-width="1"/><line x1="714.50" y1="12" x2="714.50" y2="15" stroke="#6a6a6a" stroke-width="1"/><line x1="720.50" y1="13" x2="720.50" y2="15" stroke="#6a6a6a" stroke-width="1"/><line x1="726.50" y1="12" x2="726.50" y2="15" stroke="#6a6a6a" stroke-width="1"/><line x1="731.50" y1="13" x2="731.50" y2="15" stroke="#6a6a6a" stroke-width="1"/><line x1="737.50" y1="12" x2="737.50" y2="15" stroke="#6a6a6a" stroke-width="1"/><line x1="742.50" y1="13" x2="742.50" y2="15" stroke="#6a6a6a" stroke-width="1"/><line x1="748.50" y1="0.5" x2="748.50" y2="15" stroke="#727272" stroke-width="1"/><line x1="754.50" y1="13" x2="754.50" y2="15" stroke="#6a6a6a" stroke-width="1"/><line x1="759.50" y1="12" x2="759.50" y2="15" stroke="#6a6a6a" stroke-width="1"/><line x1="765.50" y1="13" x2="765.50" y2="15" stroke="#6a6a6a" stroke-width="1"/><line x1="771.50" y1="12" x2="771.50" y2="15" stroke="#6a6a6a" stroke-width="1"/><line x1="776.50" y1="13" x2="776.50" y2="15" stroke="#6a6a6a" stroke-width="1"/><line x1="782.50" y1="12" x2="782.50" y2="15" stroke="#6a6a6a" stroke-width="1"/><line x1="787.50" y1="13" x2="787.50" y2="15" stroke="#6a6a6a" stroke-width="1"/><line x1="793.50" y1="10" x2="793.50" y2="15" stroke="#6a6a6a" stroke-width="1"/><line x1="799.50" y1="13" x2="799.50" y2="15" stroke="#6a6a6a" stroke-width="1"/><line x1="804.50" y1="12" x2="804.50" y2="15" stroke="#6a6a6a" stroke-width="1"/><line x1="810.50" y1="13" x2="810.50" y2="15" stroke="#6a6a6a" stroke-width="1"/><line x1="816.50" y1="12" x2="816.50" y2="15" stroke="#6a6a6a" stroke-width="1"/><line x1="821.50" y1="13" x2="821.50" y2="15" stroke="#6a6a6a" stroke-width="1"/><line x1="827.50" y1="12" x2="827.50" y2="15" stroke="#6a6a6a" stroke-width="1"/><line x1="832.50" y1="13" x2="832.50" y2="15" stroke="#6a6a6a" stroke-width="1"/><line x1="838.50" y1="0.5" x2="838.50" y2="15" stroke="#727272" stroke-width="1"/><line x1="844.50" y1="13" x2="844.50" y2="15" stroke="#6a6a6a" stroke-width="1"/><line x1="849.50" y1="12" x2="849.50" y2="15" stroke="#6a6a6a" stroke-width="1"/><line x1="855.50" y1="13" x2="855.50" y2="15" stroke="#6a6a6a" stroke-width="1"/><line x1="861.50" y1="12" x2="861.50" y2="15" stroke="#6a6a6a" stroke-width="1"/><line x1="866.50" y1="13" x2="866.50" y2="15" stroke="#6a6a6a" stroke-width="1"/><line x1="872.50" y1="12" x2="872.50" y2="15" stroke="#6a6a6a" stroke-width="1"/><line x1="877.50" y1="13" x2="877.50" y2="15" stroke="#6a6a6a" stroke-width="1"/><line x1="883.50" y1="10" x2="883.50" y2="15" stroke="#6a6a6a" stroke-width="1"/><line x1="889.50" y1="13" x2="889.50" y2="15" stroke="#6a6a6a" stroke-width="1"/><line x1="894.50" y1="12" x2="894.50" y2="15" stroke="#6a6a6a" stroke-width="1"/><line x1="900.50" y1="13" x2="900.50" y2="15" stroke="#6a6a6a" stroke-width="1"/><line x1="906.50" y1="12" x2="906.50" y2="15" stroke="#6a6a6a" stroke-width="1"/><line x1="911.50" y1="13" x2="911.50" y2="15" stroke="#6a6a6a" stroke-width="1"/><line x1="917.50" y1="12" x2="917.50" y2="15" stroke="#6a6a6a" stroke-width="1"/><line x1="922.50" y1="13" x2="922.50" y2="15" stroke="#6a6a6a" stroke-width="1"/><line x1="928.50" y1="0.5" x2="928.50" y2="15" stroke="#727272" stroke-width="1"/><line x1="934.50" y1="13" x2="934.50" y2="15" stroke="#6a6a6a" stroke-width="1"/><line x1="939.50" y1="12" x2="939.50" y2="15" stroke="#6a6a6a" stroke-width="1"/><line x1="945.50" y1="13" x2="945.50" y2="15" stroke="#6a6a6a" stroke-width="1"/><line x1="951.50" y1="12" x2="951.50" y2="15" stroke="#6a6a6a" stroke-width="1"/><line x1="956.50" y1="13" x2="956.50" y2="15" stroke="#6a6a6a" stroke-width="1"/><line x1="962.50" y1="12" x2="962.50" y2="15" stroke="#6a6a6a" stroke-width="1"/><line x1="967.50" y1="13" x2="967.50" y2="15" stroke="#6a6a6a" stroke-width="1"/><line x1="973.50" y1="10" x2="973.50" y2="15" stroke="#6a6a6a" stroke-width="1"/><line x1="979.50" y1="13" x2="979.50" y2="15" stroke="#6a6a6a" stroke-width="1"/><line x1="984.50" y1="12" x2="984.50" y2="15" stroke="#6a6a6a" stroke-width="1"/><line x1="990.50" y1="13" x2="990.50" y2="15" stroke="#6a6a6a" stroke-width="1"/><line x1="996.50" y1="12" x2="996.50" y2="15" stroke="#6a6a6a" stroke-width="1"/><line x1="1001.50" y1="13" x2="1001.50" y2="15" stroke="#6a6a6a" stroke-width="1"/><line x1="1007.50" y1="12" x2="1007.50" y2="15" stroke="#6a6a6a" stroke-width="1"/><line x1="1012.50" y1="13" x2="1012.50" y2="15" stroke="#6a6a6a" stroke-width="1"/><line x1="1018.50" y1="0.5" x2="1018.50" y2="15" stroke="#727272" stroke-width="1"/><line x1="1024.50" y1="13" x2="1024.50" y2="15" stroke="#6a6a6a" stroke-width="1"/><line x1="1029.50" y1="12" x2="1029.50" y2="15" stroke="#6a6a6a" stroke-width="1"/><line x1="1035.50" y1="13" x2="1035.50" y2="15" stroke="#6a6a6a" stroke-width="1"/><line x1="1041.50" y1="12" x2="1041.50" y2="15" stroke="#6a6a6a" stroke-width="1"/><line x1="1046.50" y1="13" x2="1046.50" y2="15" stroke="#6a6a6a" stroke-width="1"/><line x1="1052.50" y1="12" x2="1052.50" y2="15" stroke="#6a6a6a" stroke-width="1"/><line x1="1057.50" y1="13" x2="1057.50" y2="15" stroke="#6a6a6a" stroke-width="1"/><line x1="1063.50" y1="10" x2="1063.50" y2="15" stroke="#6a6a6a" stroke-width="1"/><line x1="1069.50" y1="13" x2="1069.50" y2="15" stroke="#6a6a6a" stroke-width="1"/><line x1="1074.50" y1="12" x2="1074.50" y2="15" stroke="#6a6a6a" stroke-width="1"/><line x1="1080.50" y1="13" x2="1080.50" y2="15" stroke="#6a6a6a" stroke-width="1"/><line x1="1086.50" y1="12" x2="1086.50" y2="15" stroke="#6a6a6a" stroke-width="1"/><line x1="1091.50" y1="13" x2="1091.50" y2="15" stroke="#6a6a6a" stroke-width="1"/><line x1="1097.50" y1="12" x2="1097.50" y2="15" stroke="#6a6a6a" stroke-width="1"/><line x1="1102.50" y1="13" x2="1102.50" y2="15" stroke="#6a6a6a" stroke-width="1"/><line x1="1108.50" y1="0.5" x2="1108.50" y2="15" stroke="#727272" stroke-width="1"/><line x1="1114.50" y1="13" x2="1114.50" y2="15" stroke="#6a6a6a" stroke-width="1"/><line x1="1119.50" y1="12" x2="1119.50" y2="15" stroke="#6a6a6a" stroke-width="1"/></svg>
<span id="t24" class="t" style="left:66.5px;top:76.73px;font-size:8px;color:#a8a8a8;">0</span>
<span id="t25" class="t" style="left:156.5px;top:76.73px;font-size:8px;color:#a8a8a8;">1</span>
<span id="t26" class="t" style="left:246.5px;top:76.73px;font-size:8px;color:#a8a8a8;">2</span>
<span id="t27" class="t" style="left:336.5px;top:76.73px;font-size:8px;color:#a8a8a8;">3</span>
<span id="t28" class="t" style="left:426.5px;top:76.73px;font-size:8px;color:#a8a8a8;">4</span>
<span id="t29" class="t" style="left:516.5px;top:76.73px;font-size:8px;color:#a8a8a8;">5</span>
<span id="t30" class="t" style="left:606.5px;top:76.73px;font-size:8px;color:#a8a8a8;">6</span>
<span id="t31" class="t" style="left:696.5px;top:76.73px;font-size:8px;color:#a8a8a8;">7</span>
<span id="t32" class="t" style="left:786.5px;top:76.73px;font-size:8px;color:#a8a8a8;">8</span>
<span id="t33" class="t" style="left:876.5px;top:76.73px;font-size:8px;color:#a8a8a8;">9</span>
<span id="t34" class="t" style="left:966.5px;top:76.73px;font-size:8px;color:#a8a8a8;">10</span>
<span id="t35" class="t" style="left:1056.5px;top:76.73px;font-size:8px;color:#a8a8a8;">11</span>
<span id="t36" class="t" style="left:1146.5px;top:76.73px;font-size:8px;color:#a8a8a8;">12</span>
<svg class="a" style="left:35px;top:73px;" width="14" height="15" viewBox="0 0 14 15"><rect x="1" y="1" width="1" height="1" fill="#545454"/><rect x="1" y="4" width="1" height="1" fill="#545454"/><rect x="1" y="7" width="1" height="1" fill="#545454"/><rect x="1" y="10" width="1" height="1" fill="#545454"/><rect x="1" y="13" width="1" height="1" fill="#545454"/><rect x="4" y="1" width="1" height="1" fill="#545454"/><rect x="4" y="4" width="1" height="1" fill="#545454"/><rect x="4" y="7" width="1" height="1" fill="#545454"/><rect x="4" y="10" width="1" height="1" fill="#545454"/><rect x="4" y="13" width="1" height="1" fill="#545454"/><rect x="7" y="1" width="1" height="1" fill="#545454"/><rect x="7" y="4" width="1" height="1" fill="#545454"/><rect x="7" y="7" width="1" height="1" fill="#545454"/><rect x="7" y="10" width="1" height="1" fill="#545454"/><rect x="7" y="13" width="1" height="1" fill="#545454"/><rect x="10" y="1" width="1" height="1" fill="#545454"/><rect x="10" y="4" width="1" height="1" fill="#545454"/><rect x="10" y="7" width="1" height="1" fill="#545454"/><rect x="10" y="10" width="1" height="1" fill="#545454"/><rect x="10" y="13" width="1" height="1" fill="#545454"/><rect x="13" y="1" width="1" height="1" fill="#545454"/><rect x="13" y="4" width="1" height="1" fill="#545454"/><rect x="13" y="7" width="1" height="1" fill="#545454"/><rect x="13" y="10" width="1" height="1" fill="#545454"/><rect x="13" y="13" width="1" height="1" fill="#545454"/></svg>
<svg class="a" style="left:35px;top:88px;" width="14" height="794" viewBox="0 0 14 794"><line x1="12" y1="1.50" x2="14" y2="1.50" stroke="#6a6a6a" stroke-width="1"/><line x1="13" y1="6.50" x2="14" y2="6.50" stroke="#6a6a6a" stroke-width="1"/><line x1="12" y1="12.50" x2="14" y2="12.50" stroke="#6a6a6a" stroke-width="1"/><line x1="13" y1="18.50" x2="14" y2="18.50" stroke="#6a6a6a" stroke-width="1"/><line x1="12" y1="23.50" x2="14" y2="23.50" stroke="#6a6a6a" stroke-width="1"/><line x1="13" y1="29.50" x2="14" y2="29.50" stroke="#6a6a6a" stroke-width="1"/><line x1="0.5" y1="35.50" x2="14" y2="35.50" stroke="#727272" stroke-width="1"/><line x1="13" y1="40.50" x2="14" y2="40.50" stroke="#6a6a6a" stroke-width="1"/><line x1="12" y1="46.50" x2="14" y2="46.50" stroke="#6a6a6a" stroke-width="1"/><line x1="13" y1="51.50" x2="14" y2="51.50" stroke="#6a6a6a" stroke-width="1"/><line x1="12" y1="57.50" x2="14" y2="57.50" stroke="#6a6a6a" stroke-width="1"/><line x1="13" y1="63.50" x2="14" y2="63.50" stroke="#6a6a6a" stroke-width="1"/><line x1="12" y1="68.50" x2="14" y2="68.50" stroke="#6a6a6a" stroke-width="1"/><line x1="13" y1="74.50" x2="14" y2="74.50" stroke="#6a6a6a" stroke-width="1"/><line x1="9" y1="80.50" x2="14" y2="80.50" stroke="#6a6a6a" stroke-width="1"/><line x1="13" y1="85.50" x2="14" y2="85.50" stroke="#6a6a6a" stroke-width="1"/><line x1="12" y1="91.50" x2="14" y2="91.50" stroke="#6a6a6a" stroke-width="1"/><line x1="13" y1="96.50" x2="14" y2="96.50" stroke="#6a6a6a" stroke-width="1"/><line x1="12" y1="102.50" x2="14" y2="102.50" stroke="#6a6a6a" stroke-width="1"/><line x1="13" y1="108.50" x2="14" y2="108.50" stroke="#6a6a6a" stroke-width="1"/><line x1="12" y1="113.50" x2="14" y2="113.50" stroke="#6a6a6a" stroke-width="1"/><line x1="13" y1="119.50" x2="14" y2="119.50" stroke="#6a6a6a" stroke-width="1"/><line x1="0.5" y1="125.50" x2="14" y2="125.50" stroke="#727272" stroke-width="1"/><line x1="13" y1="130.50" x2="14" y2="130.50" stroke="#6a6a6a" stroke-width="1"/><line x1="12" y1="136.50" x2="14" y2="136.50" stroke="#6a6a6a" stroke-width="1"/><line x1="13" y1="141.50" x2="14" y2="141.50" stroke="#6a6a6a" stroke-width="1"/><line x1="12" y1="147.50" x2="14" y2="147.50" stroke="#6a6a6a" stroke-width="1"/><line x1="13" y1="153.50" x2="14" y2="153.50" stroke="#6a6a6a" stroke-width="1"/><line x1="12" y1="158.50" x2="14" y2="158.50" stroke="#6a6a6a" stroke-width="1"/><line x1="13" y1="164.50" x2="14" y2="164.50" stroke="#6a6a6a" stroke-width="1"/><line x1="9" y1="170.50" x2="14" y2="170.50" stroke="#6a6a6a" stroke-width="1"/><line x1="13" y1="175.50" x2="14" y2="175.50" stroke="#6a6a6a" stroke-width="1"/><line x1="12" y1="181.50" x2="14" y2="181.50" stroke="#6a6a6a" stroke-width="1"/><line x1="13" y1="186.50" x2="14" y2="186.50" stroke="#6a6a6a" stroke-width="1"/><line x1="12" y1="192.50" x2="14" y2="192.50" stroke="#6a6a6a" stroke-width="1"/><line x1="13" y1="198.50" x2="14" y2="198.50" stroke="#6a6a6a" stroke-width="1"/><line x1="12" y1="203.50" x2="14" y2="203.50" stroke="#6a6a6a" stroke-width="1"/><line x1="13" y1="209.50" x2="14" y2="209.50" stroke="#6a6a6a" stroke-width="1"/><line x1="0.5" y1="215.50" x2="14" y2="215.50" stroke="#727272" stroke-width="1"/><line x1="13" y1="220.50" x2="14" y2="220.50" stroke="#6a6a6a" stroke-width="1"/><line x1="12" y1="226.50" x2="14" y2="226.50" stroke="#6a6a6a" stroke-width="1"/><line x1="13" y1="231.50" x2="14" y2="231.50" stroke="#6a6a6a" stroke-width="1"/><line x1="12" y1="237.50" x2="14" y2="237.50" stroke="#6a6a6a" stroke-width="1"/><line x1="13" y1="243.50" x2="14" y2="243.50" stroke="#6a6a6a" stroke-width="1"/><line x1="12" y1="248.50" x2="14" y2="248.50" stroke="#6a6a6a" stroke-width="1"/><line x1="13" y1="254.50" x2="14" y2="254.50" stroke="#6a6a6a" stroke-width="1"/><line x1="9" y1="260.50" x2="14" y2="260.50" stroke="#6a6a6a" stroke-width="1"/><line x1="13" y1="265.50" x2="14" y2="265.50" stroke="#6a6a6a" stroke-width="1"/><line x1="12" y1="271.50" x2="14" y2="271.50" stroke="#6a6a6a" stroke-width="1"/><line x1="13" y1="276.50" x2="14" y2="276.50" stroke="#6a6a6a" stroke-width="1"/><line x1="12" y1="282.50" x2="14" y2="282.50" stroke="#6a6a6a" stroke-width="1"/><line x1="13" y1="288.50" x2="14" y2="288.50" stroke="#6a6a6a" stroke-width="1"/><line x1="12" y1="293.50" x2="14" y2="293.50" stroke="#6a6a6a" stroke-width="1"/><line x1="13" y1="299.50" x2="14" y2="299.50" stroke="#6a6a6a" stroke-width="1"/><line x1="0.5" y1="305.50" x2="14" y2="305.50" stroke="#727272" stroke-width="1"/><line x1="13" y1="310.50" x2="14" y2="310.50" stroke="#6a6a6a" stroke-width="1"/><line x1="12" y1="316.50" x2="14" y2="316.50" stroke="#6a6a6a" stroke-width="1"/><line x1="13" y1="321.50" x2="14" y2="321.50" stroke="#6a6a6a" stroke-width="1"/><line x1="12" y1="327.50" x2="14" y2="327.50" stroke="#6a6a6a" stroke-width="1"/><line x1="13" y1="333.50" x2="14" y2="333.50" stroke="#6a6a6a" stroke-width="1"/><line x1="12" y1="338.50" x2="14" y2="338.50" stroke="#6a6a6a" stroke-width="1"/><line x1="13" y1="344.50" x2="14" y2="344.50" stroke="#6a6a6a" stroke-width="1"/><line x1="9" y1="350.50" x2="14" y2="350.50" stroke="#6a6a6a" stroke-width="1"/><line x1="13" y1="355.50" x2="14" y2="355.50" stroke="#6a6a6a" stroke-width="1"/><line x1="12" y1="361.50" x2="14" y2="361.50" stroke="#6a6a6a" stroke-width="1"/><line x1="13" y1="366.50" x2="14" y2="366.50" stroke="#6a6a6a" stroke-width="1"/><line x1="12" y1="372.50" x2="14" y2="372.50" stroke="#6a6a6a" stroke-width="1"/><line x1="13" y1="378.50" x2="14" y2="378.50" stroke="#6a6a6a" stroke-width="1"/><line x1="12" y1="383.50" x2="14" y2="383.50" stroke="#6a6a6a" stroke-width="1"/><line x1="13" y1="389.50" x2="14" y2="389.50" stroke="#6a6a6a" stroke-width="1"/><line x1="0.5" y1="395.50" x2="14" y2="395.50" stroke="#727272" stroke-width="1"/><line x1="13" y1="400.50" x2="14" y2="400.50" stroke="#6a6a6a" stroke-width="1"/><line x1="12" y1="406.50" x2="14" y2="406.50" stroke="#6a6a6a" stroke-width="1"/><line x1="13" y1="411.50" x2="14" y2="411.50" stroke="#6a6a6a" stroke-width="1"/><line x1="12" y1="417.50" x2="14" y2="417.50" stroke="#6a6a6a" stroke-width="1"/><line x1="13" y1="423.50" x2="14" y2="423.50" stroke="#6a6a6a" stroke-width="1"/><line x1="12" y1="428.50" x2="14" y2="428.50" stroke="#6a6a6a" stroke-width="1"/><line x1="13" y1="434.50" x2="14" y2="434.50" stroke="#6a6a6a" stroke-width="1"/><line x1="9" y1="440.50" x2="14" y2="440.50" stroke="#6a6a6a" stroke-width="1"/><line x1="13" y1="445.50" x2="14" y2="445.50" stroke="#6a6a6a" stroke-width="1"/><line x1="12" y1="451.50" x2="14" y2="451.50" stroke="#6a6a6a" stroke-width="1"/><line x1="13" y1="456.50" x2="14" y2="456.50" stroke="#6a6a6a" stroke-width="1"/><line x1="12" y1="462.50" x2="14" y2="462.50" stroke="#6a6a6a" stroke-width="1"/><line x1="13" y1="468.50" x2="14" y2="468.50" stroke="#6a6a6a" stroke-width="1"/><line x1="12" y1="473.50" x2="14" y2="473.50" stroke="#6a6a6a" stroke-width="1"/><line x1="13" y1="479.50" x2="14" y2="479.50" stroke="#6a6a6a" stroke-width="1"/><line x1="0.5" y1="485.50" x2="14" y2="485.50" stroke="#727272" stroke-width="1"/><line x1="13" y1="490.50" x2="14" y2="490.50" stroke="#6a6a6a" stroke-width="1"/><line x1="12" y1="496.50" x2="14" y2="496.50" stroke="#6a6a6a" stroke-width="1"/><line x1="13" y1="501.50" x2="14" y2="501.50" stroke="#6a6a6a" stroke-width="1"/><line x1="12" y1="507.50" x2="14" y2="507.50" stroke="#6a6a6a" stroke-width="1"/><line x1="13" y1="513.50" x2="14" y2="513.50" stroke="#6a6a6a" stroke-width="1"/><line x1="12" y1="518.50" x2="14" y2="518.50" stroke="#6a6a6a" stroke-width="1"/><line x1="13" y1="524.50" x2="14" y2="524.50" stroke="#6a6a6a" stroke-width="1"/><line x1="9" y1="530.50" x2="14" y2="530.50" stroke="#6a6a6a" stroke-width="1"/><line x1="13" y1="535.50" x2="14" y2="535.50" stroke="#6a6a6a" stroke-width="1"/><line x1="12" y1="541.50" x2="14" y2="541.50" stroke="#6a6a6a" stroke-width="1"/><line x1="13" y1="546.50" x2="14" y2="546.50" stroke="#6a6a6a" stroke-width="1"/><line x1="12" y1="552.50" x2="14" y2="552.50" stroke="#6a6a6a" stroke-width="1"/><line x1="13" y1="558.50" x2="14" y2="558.50" stroke="#6a6a6a" stroke-width="1"/><line x1="12" y1="563.50" x2="14" y2="563.50" stroke="#6a6a6a" stroke-width="1"/><line x1="13" y1="569.50" x2="14" y2="569.50" stroke="#6a6a6a" stroke-width="1"/><line x1="0.5" y1="575.50" x2="14" y2="575.50" stroke="#727272" stroke-width="1"/><line x1="13" y1="580.50" x2="14" y2="580.50" stroke="#6a6a6a" stroke-width="1"/><line x1="12" y1="586.50" x2="14" y2="586.50" stroke="#6a6a6a" stroke-width="1"/><line x1="13" y1="591.50" x2="14" y2="591.50" stroke="#6a6a6a" stroke-width="1"/><line x1="12" y1="597.50" x2="14" y2="597.50" stroke="#6a6a6a" stroke-width="1"/><line x1="13" y1="603.50" x2="14" y2="603.50" stroke="#6a6a6a" stroke-width="1"/><line x1="12" y1="608.50" x2="14" y2="608.50" stroke="#6a6a6a" stroke-width="1"/><line x1="13" y1="614.50" x2="14" y2="614.50" stroke="#6a6a6a" stroke-width="1"/><line x1="9" y1="620.50" x2="14" y2="620.50" stroke="#6a6a6a" stroke-width="1"/><line x1="13" y1="625.50" x2="14" y2="625.50" stroke="#6a6a6a" stroke-width="1"/><line x1="12" y1="631.50" x2="14" y2="631.50" stroke="#6a6a6a" stroke-width="1"/><line x1="13" y1="636.50" x2="14" y2="636.50" stroke="#6a6a6a" stroke-width="1"/><line x1="12" y1="642.50" x2="14" y2="642.50" stroke="#6a6a6a" stroke-width="1"/><line x1="13" y1="648.50" x2="14" y2="648.50" stroke="#6a6a6a" stroke-width="1"/><line x1="12" y1="653.50" x2="14" y2="653.50" stroke="#6a6a6a" stroke-width="1"/><line x1="13" y1="659.50" x2="14" y2="659.50" stroke="#6a6a6a" stroke-width="1"/><line x1="0.5" y1="665.50" x2="14" y2="665.50" stroke="#727272" stroke-width="1"/><line x1="13" y1="670.50" x2="14" y2="670.50" stroke="#6a6a6a" stroke-width="1"/><line x1="12" y1="676.50" x2="14" y2="676.50" stroke="#6a6a6a" stroke-width="1"/><line x1="13" y1="681.50" x2="14" y2="681.50" stroke="#6a6a6a" stroke-width="1"/><line x1="12" y1="687.50" x2="14" y2="687.50" stroke="#6a6a6a" stroke-width="1"/><line x1="13" y1="693.50" x2="14" y2="693.50" stroke="#6a6a6a" stroke-width="1"/><line x1="12" y1="698.50" x2="14" y2="698.50" stroke="#6a6a6a" stroke-width="1"/><line x1="13" y1="704.50" x2="14" y2="704.50" stroke="#6a6a6a" stroke-width="1"/><line x1="9" y1="710.50" x2="14" y2="710.50" stroke="#6a6a6a" stroke-width="1"/><line x1="13" y1="715.50" x2="14" y2="715.50" stroke="#6a6a6a" stroke-width="1"/><line x1="12" y1="721.50" x2="14" y2="721.50" stroke="#6a6a6a" stroke-width="1"/><line x1="13" y1="726.50" x2="14" y2="726.50" stroke="#6a6a6a" stroke-width="1"/><line x1="12" y1="732.50" x2="14" y2="732.50" stroke="#6a6a6a" stroke-width="1"/><line x1="13" y1="738.50" x2="14" y2="738.50" stroke="#6a6a6a" stroke-width="1"/><line x1="12" y1="743.50" x2="14" y2="743.50" stroke="#6a6a6a" stroke-width="1"/><line x1="13" y1="749.50" x2="14" y2="749.50" stroke="#6a6a6a" stroke-width="1"/><line x1="0.5" y1="755.50" x2="14" y2="755.50" stroke="#727272" stroke-width="1"/><line x1="13" y1="760.50" x2="14" y2="760.50" stroke="#6a6a6a" stroke-width="1"/><line x1="12" y1="766.50" x2="14" y2="766.50" stroke="#6a6a6a" stroke-width="1"/><line x1="13" y1="771.50" x2="14" y2="771.50" stroke="#6a6a6a" stroke-width="1"/><line x1="12" y1="777.50" x2="14" y2="777.50" stroke="#6a6a6a" stroke-width="1"/><line x1="13" y1="783.50" x2="14" y2="783.50" stroke="#6a6a6a" stroke-width="1"/><line x1="12" y1="788.50" x2="14" y2="788.50" stroke="#6a6a6a" stroke-width="1"/></svg>
<span id="t37" class="t" style="left:39.8px;top:124.43px;font-size:8px;color:#a8a8a8;">1</span>
<span id="t38" class="t" style="left:39.8px;top:214.43px;font-size:8px;color:#a8a8a8;">0</span>
<span id="t39" class="t" style="left:39.8px;top:304.43px;font-size:8px;color:#a8a8a8;">1</span>
<span id="t40" class="t" style="left:39.8px;top:394.43px;font-size:8px;color:#a8a8a8;">2</span>
<span id="t41" class="t" style="left:39.8px;top:484.43px;font-size:8px;color:#a8a8a8;">3</span>
<span id="t42" class="t" style="left:39.8px;top:574.43px;font-size:8px;color:#a8a8a8;">4</span>
<span id="t43" class="t" style="left:39.8px;top:664.43px;font-size:8px;color:#a8a8a8;">5</span>
<span id="t44" class="t" style="left:39.8px;top:754.43px;font-size:8px;color:#a8a8a8;">6</span>
<div class="a" style="left:37px;top:878px;width:11px;height:1px;background:#6a6a6a;"></div>
<div class="a" style="left:631px;top:74px;width:1px;height:10px;background:#e8e8e8;"></div>
<div class="a" style="left:37px;top:412px;width:9px;height:1px;background:#e8e8e8;"></div>
<span id="t45" class="t" style="left:46px;top:884.80px;font-size:8.5px;color:#e0e0e0;">90%</span>
<span id="t46" class="t" style="left:95px;top:884.80px;font-size:8.5px;color:#e0e0e0;transform:scaleX(0.9737);">11.75 in x 6.608 in (120 ppi)</span>
<svg class="a" style="left:218px;top:884px;" width="6" height="10" viewBox="0 0 6 10"><path d="M1 1l3.5 4-3.5 4" fill="none" stroke="#cfcfcf" stroke-width="1.1"/></svg>
<svg class="a" style="left:234px;top:885px;" width="5" height="9" viewBox="0 0 5 9"><path d="M4 1L1 4.5 4 8" fill="none" stroke="#9a9a9a" stroke-width="1"/></svg>
<svg class="a" style="left:1147px;top:885px;" width="5" height="9" viewBox="0 0 5 9"><path d="M1 1l3 3.5L1 8" fill="none" stroke="#9a9a9a" stroke-width="1"/></svg>
<svg class="a" style="left:1159px;top:78px;" width="10" height="7" viewBox="0 0 10 7"><path d="M1 5.5l4-4 4 4" fill="none" stroke="#a0a0a0" stroke-width="1"/></svg>
<div class="a" style="left:63px;top:212px;width:1060px;height:598px;background:#fff;border:1px solid #111"></div>
<svg class="a" style="left:0px;top:0px;pointer-events:none" width="1600" height="900" viewBox="0 0 1600 900"><defs>
<linearGradient id="gbody" x1="0" x2="1" y1="0" y2="0">
<stop offset="0" stop-color="#dadada"/><stop offset="0.08" stop-color="#f0f0f0"/><stop offset="0.3" stop-color="#ebebeb"/>
<stop offset="0.5" stop-color="#d6d6d6"/><stop offset="0.66" stop-color="#bdbdbd"/><stop offset="0.8" stop-color="#939393"/>
<stop offset="0.9" stop-color="#a4a4a4"/><stop offset="1" stop-color="#c4c4c4"/></linearGradient>
<linearGradient id="gbodyv" x1="0" x2="0" y1="0" y2="1">
<stop offset="0" stop-color="#000" stop-opacity="0.25"/><stop offset="0.05" stop-color="#000" stop-opacity="0.1"/><stop offset="0.14" stop-color="#000" stop-opacity="0"/>
<stop offset="1" stop-color="#000" stop-opacity="0"/></linearGradient>
<linearGradient id="glid" x1="0" x2="1" y1="0" y2="0">
<stop offset="0" stop-color="#a4a4a4"/><stop offset="0.12" stop-color="#b8b8b8"/><stop offset="0.28" stop-color="#c4c4c4"/>
<stop offset="0.45" stop-color="#a6a6a6"/><stop offset="0.62" stop-color="#989898"/><stop offset="0.8" stop-color="#727272"/>
<stop offset="0.92" stop-color="#a2a2a2"/><stop offset="1" stop-color="#8e8e8e"/></linearGradient>
<linearGradient id="grim" x1="0" x2="1" y1="0" y2="0">
<stop offset="0" stop-color="#a8a8a8"/><stop offset="0.3" stop-color="#d4d4d4"/><stop offset="0.5" stop-color="#c0c0c0"/>
<stop offset="0.7" stop-color="#a6a6a6"/><stop offset="0.88" stop-color="#c6c6c6"/><stop offset="1" stop-color="#9c9c9c"/></linearGradient>
<linearGradient id="grim2" x1="0" x2="1" y1="0" y2="0">
<stop offset="0" stop-color="#9a9a9a"/><stop offset="0.35" stop-color="#c6c6c6"/><stop offset="0.6" stop-color="#aaaaaa"/>
<stop offset="0.78" stop-color="#8e8e8e"/><stop offset="0.9" stop-color="#b4b4b4"/><stop offset="1" stop-color="#8c8c8c"/></linearGradient>
</defs><clipPath id="dc"><rect x="64" y="213" width="1058" height="596"/></clipPath><g clip-path="url(#dc)"><g id="art"><filter id="blur1" x="-5%" y="-20%" width="110%" height="140%"><feGaussianBlur stdDeviation="1"/></filter><filter id="blur3" x="-5%" y="-50%" width="110%" height="200%"><feGaussianBlur stdDeviation="3"/></filter>
<clipPath id="cbody"><path d='M448.5 324 L737.5 324 L692 757 C680 770 640 777 592 777 C544 777 504 770 492 757 Z'/></clipPath>
<clipPath id="clid"><path d='M452 305 L454.6 289 Q455.5 282.8 462 282 Q592 265 723 282 Q729.5 282.8 730.4 289 L733 305 C741 306 746.8 309 746.8 314 C746.8 318 744 321 742 322 L751.9 336.5 Q745 338.5 737 335 Q592 322 448 335 Q440 338.5 433.5 336.5 L442 322 C440 321 438.6 318 438.6 314 C438.6 309 444 306 452 305'/></clipPath>
<g clip-path="url(#cbody)"><path d="M449.00 328L452.30 328L493.76 790L491.00 790Z" fill="#d5d5d5"/><path d="M450.80 328L454.10 328L495.01 790L492.26 790Z" fill="#d7d7d7"/><path d="M452.60 328L455.90 328L496.27 790L493.51 790Z" fill="#dadada"/><path d="M454.40 328L457.70 328L497.52 790L494.77 790Z" fill="#dcdcdc"/><path d="M456.20 328L459.50 328L498.78 790L496.02 790Z" fill="#dfdfdf"/><path d="M458.00 328L461.30 328L500.04 790L497.28 790Z" fill="#e1e1e1"/><path d="M459.80 328L463.10 328L501.29 790L498.54 790Z" fill="#e4e4e4"/><path d="M461.60 328L464.90 328L502.55 790L499.79 790Z" fill="#e6e6e6"/><path d="M463.40 328L466.70 328L503.81 790L501.05 790Z" fill="#e8e8e8"/><path d="M465.20 328L468.50 328L505.06 790L502.31 790Z" fill="#e9e9e9"/><path d="M467.00 328L470.30 328L506.32 790L503.56 790Z" fill="#e9e9e9"/><path d="M468.80 328L472.10 328L507.57 790L504.82 790Z" fill="#eaeaea"/><path d="M470.60 328L473.90 328L508.83 790L506.07 790Z" fill="#ebebeb"/><path d="M472.40 328L475.70 328L510.09 790L507.33 790Z" fill="#ebebeb"/><path d="M474.20 328L477.50 328L511.34 790L508.59 790Z" fill="#ececec"/><path d="M476.00 328L479.30 328L512.60 790L509.84 790Z" fill="#ededed"/><path d="M477.80 328L481.10 328L513.86 790L511.10 790Z" fill="#eeeeee"/><path d="M479.60 328L482.90 328L515.11 790L512.36 790Z" fill="#eeeeee"/><path d="M481.40 328L484.70 328L516.37 790L513.61 790Z" fill="#efefef"/><path d="M483.20 328L486.50 328L517.62 790L514.87 790Z" fill="#efefef"/><path d="M485.00 328L488.30 328L518.88 790L516.12 790Z" fill="#efefef"/><path d="M486.80 328L490.10 328L520.14 790L517.38 790Z" fill="#efefef"/><path d="M488.60 328L491.90 328L521.39 790L518.64 790Z" fill="#efefef"/><path d="M490.40 328L493.70 328L522.65 790L519.89 790Z" fill="#efefef"/><path d="M492.20 328L495.50 328L523.91 790L521.15 790Z" fill="#efefef"/><path d="M494.00 328L497.30 328L525.16 790L522.41 790Z" fill="#efefef"/><path d="M495.80 328L499.10 328L526.42 790L523.66 790Z" fill="#eeeeee"/><path d="M497.60 328L500.90 328L527.67 790L524.92 790Z" fill="#eeeeee"/><path d="M499.40 328L502.70 328L528.93 790L526.17 790Z" fill="#eeeeee"/><path d="M501.20 328L504.50 328L530.19 790L527.43 790Z" fill="#eeeeee"/><path d="M503.00 328L506.30 328L531.44 790L528.69 790Z" fill="#eeeeee"/><path d="M504.80 328L508.10 328L532.70 790L529.94 790Z" fill="#eeeeee"/><path d="M506.60 328L509.90 328L533.96 790L531.20 790Z" fill="#eeeeee"/><path d="M508.40 328L511.70 328L535.21 790L532.46 790Z" fill="#eeeeee"/><path d="M510.20 328L513.50 328L536.47 790L533.71 790Z" fill="#ededed"/><path d="M512.00 328L515.30 328L537.73 790L534.97 790Z" fill="#ededed"/><path d="M513.80 328L517.10 328L538.98 790L536.23 790Z" fill="#ededed"/><path d="M515.60 328L518.90 328L540.24 790L537.48 790Z" fill="#ededed"/><path d="M517.40 328L520.70 328L541.49 790L538.74 790Z" fill="#ededed"/><path d="M519.20 328L522.50 328L542.75 790L539.99 790Z" fill="#ededed"/><path d="M521.00 328L524.30 328L544.01 790L541.25 790Z" fill="#ededed"/><path d="M522.80 328L526.10 328L545.26 790L542.51 790Z" fill="#ececec"/><path d="M524.60 328L527.90 328L546.52 790L543.76 790Z" fill="#ececec"/><path d="M526.40 328L529.70 328L547.77 790L545.02 790Z" fill="#ececec"/><path d="M528.20 328L531.50 328L549.03 790L546.27 790Z" fill="#ececec"/><path d="M530.00 328L533.30 328L550.29 790L547.53 790Z" fill="#ececec"/><path d="M531.80 328L535.10 328L551.54 790L548.79 790Z" fill="#ececec"/><path d="M533.60 328L536.90 328L552.80 790L550.04 790Z" fill="#ececec"/><path d="M535.40 328L538.70 328L554.06 790L551.30 790Z" fill="#ebebeb"/><path d="M537.20 328L540.50 328L555.31 790L552.56 790Z" fill="#ebebeb"/><path d="M539.00 328L542.30 328L556.57 790L553.81 790Z" fill="#eaeaea"/><path d="M540.80 328L544.10 328L557.83 790L555.07 790Z" fill="#eaeaea"/><path d="M542.60 328L545.90 328L559.08 790L556.33 790Z" fill="#e9e9e9"/><path d="M544.40 328L547.70 328L560.34 790L557.58 790Z" fill="#e9e9e9"/><path d="M546.20 328L549.50 328L561.59 790L558.84 790Z" fill="#e8e8e8"/><path d="M548.00 328L551.30 328L562.85 790L560.09 790Z" fill="#e8e8e8"/><path d="M549.80 328L553.10 328L564.11 790L561.35 790Z" fill="#e7e7e7"/><path d="M551.60 328L554.90 328L565.36 790L562.61 790Z" fill="#e7e7e7"/><path d="M553.40 328L556.70 328L566.62 790L563.86 790Z" fill="#e6e6e6"/><path d="M555.20 328L558.50 328L567.88 790L565.12 790Z" fill="#e6e6e6"/><path d="M557.00 328L560.30 328L569.13 790L566.38 790Z" fill="#e5e5e5"/><path d="M558.80 328L562.10 328L570.39 790L567.63 790Z" fill="#e5e5e5"/><path d="M560.60 328L563.90 328L571.64 790L568.89 790Z" fill="#e4e4e4"/><path d="M562.40 328L565.70 328L572.90 790L570.14 790Z" fill="#e4e4e4"/><path d="M564.20 328L567.50 328L574.16 790L571.40 790Z" fill="#e3e3e3"/><path d="M566.00 328L569.30 328L575.41 790L572.66 790Z" fill="#e3e3e3"/><path d="M567.80 328L571.10 328L576.67 790L573.91 790Z" fill="#e2e2e2"/><path d="M569.60 328L572.90 328L577.92 790L575.17 790Z" fill="#e2e2e2"/><path d="M571.40 328L574.70 328L579.18 790L576.42 790Z" fill="#e1e1e1"/><path d="M573.20 328L576.50 328L580.44 790L577.68 790Z" fill="#e1e1e1"/><path d="M575.00 328L578.30 328L581.69 790L578.94 790Z" fill="#e0e0e0"/><path d="M576.80 328L580.10 328L582.95 790L580.19 790Z" fill="#e0e0e0"/><path d="M578.60 328L581.90 328L584.21 790L581.45 790Z" fill="#dfdfdf"/><path d="M580.40 328L583.70 328L585.46 790L582.71 790Z" fill="#dedede"/><path d="M582.20 328L585.50 328L586.72 790L583.96 790Z" fill="#dedede"/><path d="M584.00 328L587.30 328L587.98 790L585.22 790Z" fill="#dddddd"/><path d="M585.80 328L589.10 328L589.23 790L586.48 790Z" fill="#dcdcdc"/><path d="M587.60 328L590.90 328L590.49 790L587.73 790Z" fill="#dbdbdb"/><path d="M589.40 328L592.70 328L591.74 790L588.99 790Z" fill="#dbdbdb"/><path d="M591.20 328L594.50 328L593.00 790L590.24 790Z" fill="#dadada"/><path d="M593.00 328L596.30 328L594.26 790L591.50 790Z" fill="#d9d9d9"/><path d="M594.80 328L598.10 328L595.51 790L592.76 790Z" fill="#d8d8d8"/><path d="M596.60 328L599.90 328L596.77 790L594.01 790Z" fill="#d8d8d8"/><path d="M598.40 328L601.70 328L598.02 790L595.27 790Z" fill="#d7d7d7"/><path d="M600.20 328L603.50 328L599.28 790L596.52 790Z" fill="#d6d6d6"/><path d="M602.00 328L605.30 328L600.54 790L597.78 790Z" fill="#d5d5d5"/><path d="M603.80 328L607.10 328L601.79 790L599.04 790Z" fill="#d5d5d5"/><path d="M605.60 328L608.90 328L603.05 790L600.29 790Z" fill="#d4d4d4"/><path d="M607.40 328L610.70 328L604.31 790L601.55 790Z" fill="#d3d3d3"/><path d="M609.20 328L612.50 328L605.56 790L602.81 790Z" fill="#d2d2d2"/><path d="M611.00 328L614.30 328L606.82 790L604.06 790Z" fill="#d1d1d1"/><path d="M612.80 328L616.10 328L608.08 790L605.32 790Z" fill="#d0d0d0"/><path d="M614.60 328L617.90 328L609.33 790L606.58 790Z" fill="#cecece"/><path d="M616.40 328L619.70 328L610.59 790L607.83 790Z" fill="#cdcdcd"/><path d="M618.20 328L621.50 328L611.84 790L609.09 790Z" fill="#cccccc"/><path d="M620.00 328L623.30 328L613.10 790L610.34 790Z" fill="#cbcbcb"/><path d="M621.80 328L625.10 328L614.36 790L611.60 790Z" fill="#cacaca"/><path d="M623.60 328L626.90 328L615.61 790L612.86 790Z" fill="#c9c9c9"/><path d="M625.40 328L628.70 328L616.87 790L614.11 790Z" fill="#c8c8c8"/><path d="M627.20 328L630.50 328L618.12 790L615.37 790Z" fill="#c7c7c7"/><path d="M629.00 328L632.30 328L619.38 790L616.62 790Z" fill="#c5c5c5"/><path d="M630.80 328L634.10 328L620.64 790L617.88 790Z" fill="#c4c4c4"/><path d="M632.60 328L635.90 328L621.89 790L619.14 790Z" fill="#c3c3c3"/><path d="M634.40 328L637.70 328L623.15 790L620.39 790Z" fill="#c2c2c2"/><path d="M636.20 328L639.50 328L624.41 790L621.65 790Z" fill="#c1c1c1"/><path d="M638.00 328L641.30 328L625.66 790L622.91 790Z" fill="#bfbfbf"/><path d="M639.80 328L643.10 328L626.92 790L624.16 790Z" fill="#bdbdbd"/><path d="M641.60 328L644.90 328L628.17 790L625.42 790Z" fill="#bcbcbc"/><path d="M643.40 328L646.70 328L629.43 790L626.67 790Z" fill="#bababa"/><path d="M645.20 328L648.50 328L630.69 790L627.93 790Z" fill="#b9b9b9"/><path d="M647.00 328L650.30 328L631.94 790L629.19 790Z" fill="#b7b7b7"/><path d="M648.80 328L652.10 328L633.20 790L630.44 790Z" fill="#b5b5b5"/><path d="M650.60 328L653.90 328L634.46 790L631.70 790Z" fill="#b4b4b4"/><path d="M652.40 328L655.70 328L635.71 790L632.96 790Z" fill="#b2b2b2"/><path d="M654.20 328L657.50 328L636.97 790L634.21 790Z" fill="#b1b1b1"/><path d="M656.00 328L659.30 328L638.23 790L635.47 790Z" fill="#afafaf"/><path d="M657.80 328L661.10 328L639.48 790L636.73 790Z" fill="#acacac"/><path d="M659.60 328L662.90 328L640.74 790L637.98 790Z" fill="#aaaaaa"/><path d="M661.40 328L664.70 328L641.99 790L639.24 790Z" fill="#a8a8a8"/><path d="M663.20 328L666.50 328L643.25 790L640.49 790Z" fill="#a6a6a6"/><path d="M665.00 328L668.30 328L644.51 790L641.75 790Z" fill="#a3a3a3"/><path d="M666.80 328L670.10 328L645.76 790L643.01 790Z" fill="#a1a1a1"/><path d="M668.60 328L671.90 328L647.02 790L644.26 790Z" fill="#9f9f9f"/><path d="M670.40 328L673.70 328L648.27 790L645.52 790Z" fill="#9c9c9c"/><path d="M672.20 328L675.50 328L649.53 790L646.77 790Z" fill="#9a9a9a"/><path d="M674.00 328L677.30 328L650.79 790L648.03 790Z" fill="#989898"/><path d="M675.80 328L679.10 328L652.04 790L649.29 790Z" fill="#959595"/><path d="M677.60 328L680.90 328L653.30 790L650.54 790Z" fill="#949494"/><path d="M679.40 328L682.70 328L654.56 790L651.80 790Z" fill="#939393"/><path d="M681.20 328L684.50 328L655.81 790L653.06 790Z" fill="#929292"/><path d="M683.00 328L686.30 328L657.07 790L654.31 790Z" fill="#919191"/><path d="M684.80 328L688.10 328L658.33 790L655.57 790Z" fill="#909090"/><path d="M686.60 328L689.90 328L659.58 790L656.83 790Z" fill="#8f8f8f"/><path d="M688.40 328L691.70 328L660.84 790L658.08 790Z" fill="#8e8e8e"/><path d="M690.20 328L693.50 328L662.09 790L659.34 790Z" fill="#8d8d8d"/><path d="M692.00 328L695.30 328L663.35 790L660.59 790Z" fill="#8c8c8c"/><path d="M693.80 328L697.10 328L664.61 790L661.85 790Z" fill="#8d8d8d"/><path d="M695.60 328L698.90 328L665.86 790L663.11 790Z" fill="#8f8f8f"/><path d="M697.40 328L700.70 328L667.12 790L664.36 790Z" fill="#919191"/><path d="M699.20 328L702.50 328L668.38 790L665.62 790Z" fill="#939393"/><path d="M701.00 328L704.30 328L669.63 790L666.88 790Z" fill="#959595"/><path d="M702.80 328L706.10 328L670.89 790L668.13 790Z" fill="#979797"/><path d="M704.60 328L707.90 328L672.14 790L669.39 790Z" fill="#999999"/><path d="M706.40 328L709.70 328L673.40 790L670.64 790Z" fill="#9c9c9c"/><path d="M708.20 328L711.50 328L674.66 790L671.90 790Z" fill="#9e9e9e"/><path d="M710.00 328L713.30 328L675.91 790L673.16 790Z" fill="#a0a0a0"/><path d="M711.80 328L715.10 328L677.17 790L674.41 790Z" fill="#a2a2a2"/><path d="M713.60 328L716.90 328L678.42 790L675.67 790Z" fill="#a4a4a4"/><path d="M715.40 328L718.70 328L679.68 790L676.92 790Z" fill="#a6a6a6"/><path d="M717.20 328L720.50 328L680.94 790L678.18 790Z" fill="#a8a8a8"/><path d="M719.00 328L722.30 328L682.19 790L679.44 790Z" fill="#aaaaaa"/><path d="M720.80 328L724.10 328L683.45 790L680.69 790Z" fill="#acacac"/><path d="M722.60 328L725.90 328L684.71 790L681.95 790Z" fill="#aeaeae"/><path d="M724.40 328L727.70 328L685.96 790L683.21 790Z" fill="#b0b0b0"/><path d="M726.20 328L729.50 328L687.22 790L684.46 790Z" fill="#b2b2b2"/><path d="M728.00 328L731.30 328L688.48 790L685.72 790Z" fill="#b3b3b3"/><path d="M729.80 328L733.10 328L689.73 790L686.98 790Z" fill="#b2b2b2"/><path d="M731.60 328L734.90 328L690.99 790L688.23 790Z" fill="#b2b2b2"/><path d="M733.40 328L736.70 328L692.24 790L689.49 790Z" fill="#b1b1b1"/><path d="M735.20 328L738.50 328L693.50 790L690.74 790Z" fill="#b0b0b0"/>
<g filter="url(#blur3)"><path d="M440 330 Q592 318 745 330 L745 350 Q592 338 440 350 Z" fill="#000" opacity="0.11"/>
<path d="M440 330 Q592 318 745 330 L745 340 Q592 328 440 340 Z" fill="#000" opacity="0.10"/></g>
<path d="M492 757 C504 770 544 777 592 777 C640 777 680 770 692 757" fill="none" stroke="#9a9a9a" stroke-width="1.2" opacity="0.6"/>
</g>
<g clip-path="url(#clid)"><rect x="433.00" y="262" width="3.49" height="80" fill="#a6a6a6"/><rect x="434.99" y="262" width="3.49" height="80" fill="#a7a7a7"/><rect x="436.99" y="262" width="3.49" height="80" fill="#a8a8a8"/><rect x="438.98" y="262" width="3.49" height="80" fill="#a9a9a9"/><rect x="440.98" y="262" width="3.49" height="80" fill="#a9a9a9"/><rect x="442.97" y="262" width="3.49" height="80" fill="#aaaaaa"/><rect x="444.96" y="262" width="3.49" height="80" fill="#ababab"/><rect x="446.96" y="262" width="3.49" height="80" fill="#acacac"/><rect x="448.95" y="262" width="3.49" height="80" fill="#adadad"/><rect x="450.94" y="262" width="3.49" height="80" fill="#aeaeae"/><rect x="452.94" y="262" width="3.49" height="80" fill="#afafaf"/><rect x="454.93" y="262" width="3.49" height="80" fill="#b0b0b0"/><rect x="456.93" y="262" width="3.49" height="80" fill="#b0b0b0"/><rect x="458.92" y="262" width="3.49" height="80" fill="#b1b1b1"/><rect x="460.91" y="262" width="3.49" height="80" fill="#b2b2b2"/><rect x="462.91" y="262" width="3.49" height="80" fill="#b3b3b3"/><rect x="464.90" y="262" width="3.49" height="80" fill="#b4b4b4"/><rect x="466.89" y="262" width="3.49" height="80" fill="#b4b4b4"/><rect x="468.89" y="262" width="3.49" height="80" fill="#b5b5b5"/><rect x="470.88" y="262" width="3.49" height="80" fill="#b5b5b5"/><rect x="472.88" y="262" width="3.49" height="80" fill="#b6b6b6"/><rect x="474.87" y="262" width="3.49" height="80" fill="#b6b6b6"/><rect x="476.86" y="262" width="3.49" height="80" fill="#b7b7b7"/><rect x="478.86" y="262" width="3.49" height="80" fill="#b7b7b7"/><rect x="480.85" y="262" width="3.49" height="80" fill="#b7b7b7"/><rect x="482.84" y="262" width="3.49" height="80" fill="#b8b8b8"/><rect x="484.84" y="262" width="3.49" height="80" fill="#b8b8b8"/><rect x="486.83" y="262" width="3.49" height="80" fill="#b9b9b9"/><rect x="488.82" y="262" width="3.49" height="80" fill="#b9b9b9"/><rect x="490.82" y="262" width="3.49" height="80" fill="#bababa"/><rect x="492.81" y="262" width="3.49" height="80" fill="#bababa"/><rect x="494.81" y="262" width="3.49" height="80" fill="#bbbbbb"/><rect x="496.80" y="262" width="3.49" height="80" fill="#bbbbbb"/><rect x="498.79" y="262" width="3.49" height="80" fill="#bcbcbc"/><rect x="500.79" y="262" width="3.49" height="80" fill="#bcbcbc"/><rect x="502.78" y="262" width="3.49" height="80" fill="#bdbdbd"/><rect x="504.77" y="262" width="3.49" height="80" fill="#bdbdbd"/><rect x="506.77" y="262" width="3.49" height="80" fill="#bebebe"/><rect x="508.76" y="262" width="3.49" height="80" fill="#bebebe"/><rect x="510.76" y="262" width="3.49" height="80" fill="#bfbfbf"/><rect x="512.75" y="262" width="3.49" height="80" fill="#bfbfbf"/><rect x="514.74" y="262" width="3.49" height="80" fill="#bfbfbf"/><rect x="516.74" y="262" width="3.49" height="80" fill="#bfbfbf"/><rect x="518.73" y="262" width="3.49" height="80" fill="#bebebe"/><rect x="520.73" y="262" width="3.49" height="80" fill="#bdbdbd"/><rect x="522.72" y="262" width="3.49" height="80" fill="#bcbcbc"/><rect x="524.71" y="262" width="3.49" height="80" fill="#bbbbbb"/><rect x="526.71" y="262" width="3.49" height="80" fill="#bababa"/><rect x="528.70" y="262" width="3.49" height="80" fill="#b9b9b9"/><rect x="530.69" y="262" width="3.49" height="80" fill="#b8b8b8"/><rect x="532.69" y="262" width="3.49" height="80" fill="#b8b8b8"/><rect x="534.68" y="262" width="3.49" height="80" fill="#b7b7b7"/><rect x="536.67" y="262" width="3.49" height="80" fill="#b6b6b6"/><rect x="538.67" y="262" width="3.49" height="80" fill="#b5b5b5"/><rect x="540.66" y="262" width="3.49" height="80" fill="#b4b4b4"/><rect x="542.66" y="262" width="3.49" height="80" fill="#b3b3b3"/><rect x="544.65" y="262" width="3.49" height="80" fill="#b2b2b2"/><rect x="546.64" y="262" width="3.49" height="80" fill="#b1b1b1"/><rect x="548.64" y="262" width="3.49" height="80" fill="#b0b0b0"/><rect x="550.63" y="262" width="3.49" height="80" fill="#b0b0b0"/><rect x="552.62" y="262" width="3.49" height="80" fill="#afafaf"/><rect x="554.62" y="262" width="3.49" height="80" fill="#aeaeae"/><rect x="556.61" y="262" width="3.49" height="80" fill="#adadad"/><rect x="558.61" y="262" width="3.49" height="80" fill="#acacac"/><rect x="560.60" y="262" width="3.49" height="80" fill="#ababab"/><rect x="562.59" y="262" width="3.49" height="80" fill="#ababab"/><rect x="564.59" y="262" width="3.49" height="80" fill="#aaaaaa"/><rect x="566.58" y="262" width="3.49" height="80" fill="#a9a9a9"/><rect x="568.58" y="262" width="3.49" height="80" fill="#a9a9a9"/><rect x="570.57" y="262" width="3.49" height="80" fill="#a8a8a8"/><rect x="572.56" y="262" width="3.49" height="80" fill="#a7a7a7"/><rect x="574.56" y="262" width="3.49" height="80" fill="#a7a7a7"/><rect x="576.55" y="262" width="3.49" height="80" fill="#a6a6a6"/><rect x="578.54" y="262" width="3.49" height="80" fill="#a5a5a5"/><rect x="580.54" y="262" width="3.49" height="80" fill="#a5a5a5"/><rect x="582.53" y="262" width="3.49" height="80" fill="#a4a4a4"/><rect x="584.52" y="262" width="3.49" height="80" fill="#a3a3a3"/><rect x="586.52" y="262" width="3.49" height="80" fill="#a3a3a3"/><rect x="588.51" y="262" width="3.49" height="80" fill="#a2a2a2"/><rect x="590.51" y="262" width="3.49" height="80" fill="#a1a1a1"/><rect x="592.50" y="262" width="3.49" height="80" fill="#a1a1a1"/><rect x="594.49" y="262" width="3.49" height="80" fill="#a0a0a0"/><rect x="596.49" y="262" width="3.49" height="80" fill="#9f9f9f"/><rect x="598.48" y="262" width="3.49" height="80" fill="#9f9f9f"/><rect x="600.48" y="262" width="3.49" height="80" fill="#9e9e9e"/><rect x="602.47" y="262" width="3.49" height="80" fill="#9d9d9d"/><rect x="604.46" y="262" width="3.49" height="80" fill="#9d9d9d"/><rect x="606.46" y="262" width="3.49" height="80" fill="#9c9c9c"/><rect x="608.45" y="262" width="3.49" height="80" fill="#9b9b9b"/><rect x="610.44" y="262" width="3.49" height="80" fill="#9a9a9a"/><rect x="612.44" y="262" width="3.49" height="80" fill="#9a9a9a"/><rect x="614.43" y="262" width="3.49" height="80" fill="#999999"/><rect x="616.42" y="262" width="3.49" height="80" fill="#989898"/><rect x="618.42" y="262" width="3.49" height="80" fill="#989898"/><rect x="620.41" y="262" width="3.49" height="80" fill="#979797"/><rect x="622.41" y="262" width="3.49" height="80" fill="#969696"/><rect x="624.40" y="262" width="3.49" height="80" fill="#969696"/><rect x="626.39" y="262" width="3.49" height="80" fill="#959595"/><rect x="628.39" y="262" width="3.49" height="80" fill="#949494"/><rect x="630.38" y="262" width="3.49" height="80" fill="#949494"/><rect x="632.38" y="262" width="3.49" height="80" fill="#939393"/><rect x="634.37" y="262" width="3.49" height="80" fill="#929292"/><rect x="636.36" y="262" width="3.49" height="80" fill="#929292"/><rect x="638.36" y="262" width="3.49" height="80" fill="#919191"/><rect x="640.35" y="262" width="3.49" height="80" fill="#909090"/><rect x="642.34" y="262" width="3.49" height="80" fill="#909090"/><rect x="644.34" y="262" width="3.49" height="80" fill="#8f8f8f"/><rect x="646.33" y="262" width="3.49" height="80" fill="#8e8e8e"/><rect x="648.33" y="262" width="3.49" height="80" fill="#8e8e8e"/><rect x="650.32" y="262" width="3.49" height="80" fill="#8c8c8c"/><rect x="652.31" y="262" width="3.49" height="80" fill="#8b8b8b"/><rect x="654.31" y="262" width="3.49" height="80" fill="#8a8a8a"/><rect x="656.30" y="262" width="3.49" height="80" fill="#888888"/><rect x="658.29" y="262" width="3.49" height="80" fill="#878787"/><rect x="660.29" y="262" width="3.49" height="80" fill="#858585"/><rect x="662.28" y="262" width="3.49" height="80" fill="#848484"/><rect x="664.27" y="262" width="3.49" height="80" fill="#828282"/><rect x="666.27" y="262" width="3.49" height="80" fill="#818181"/><rect x="668.26" y="262" width="3.49" height="80" fill="#7f7f7f"/><rect x="670.26" y="262" width="3.49" height="80" fill="#7e7e7e"/><rect x="672.25" y="262" width="3.49" height="80" fill="#7c7c7c"/><rect x="674.24" y="262" width="3.49" height="80" fill="#7b7b7b"/><rect x="676.24" y="262" width="3.49" height="80" fill="#7a7a7a"/><rect x="678.23" y="262" width="3.49" height="80" fill="#787878"/><rect x="680.23" y="262" width="3.49" height="80" fill="#777777"/><rect x="682.22" y="262" width="3.49" height="80" fill="#757575"/><rect x="684.21" y="262" width="3.49" height="80" fill="#747474"/><rect x="686.21" y="262" width="3.49" height="80" fill="#727272"/><rect x="688.20" y="262" width="3.49" height="80" fill="#727272"/><rect x="690.19" y="262" width="3.49" height="80" fill="#747474"/><rect x="692.19" y="262" width="3.49" height="80" fill="#757575"/><rect x="694.18" y="262" width="3.49" height="80" fill="#777777"/><rect x="696.17" y="262" width="3.49" height="80" fill="#797979"/><rect x="698.17" y="262" width="3.49" height="80" fill="#7a7a7a"/><rect x="700.16" y="262" width="3.49" height="80" fill="#7c7c7c"/><rect x="702.16" y="262" width="3.49" height="80" fill="#7d7d7d"/><rect x="704.15" y="262" width="3.49" height="80" fill="#7f7f7f"/><rect x="706.14" y="262" width="3.49" height="80" fill="#808080"/><rect x="708.14" y="262" width="3.49" height="80" fill="#828282"/><rect x="710.13" y="262" width="3.49" height="80" fill="#838383"/><rect x="712.12" y="262" width="3.49" height="80" fill="#858585"/><rect x="714.12" y="262" width="3.49" height="80" fill="#878787"/><rect x="716.11" y="262" width="3.49" height="80" fill="#898989"/><rect x="718.11" y="262" width="3.49" height="80" fill="#8c8c8c"/><rect x="720.10" y="262" width="3.49" height="80" fill="#8e8e8e"/><rect x="722.09" y="262" width="3.49" height="80" fill="#909090"/><rect x="724.09" y="262" width="3.49" height="80" fill="#939393"/><rect x="726.08" y="262" width="3.49" height="80" fill="#959595"/><rect x="728.08" y="262" width="3.49" height="80" fill="#979797"/><rect x="730.07" y="262" width="3.49" height="80" fill="#9a9a9a"/><rect x="732.06" y="262" width="3.49" height="80" fill="#9c9c9c"/><rect x="734.06" y="262" width="3.49" height="80" fill="#9e9e9e"/><rect x="736.05" y="262" width="3.49" height="80" fill="#9f9f9f"/><rect x="738.04" y="262" width="3.49" height="80" fill="#9e9e9e"/><rect x="740.04" y="262" width="3.49" height="80" fill="#9d9d9d"/><rect x="742.03" y="262" width="3.49" height="80" fill="#9c9c9c"/><rect x="744.02" y="262" width="3.49" height="80" fill="#9b9b9b"/><rect x="746.02" y="262" width="3.49" height="80" fill="#9a9a9a"/><rect x="748.01" y="262" width="3.49" height="80" fill="#999999"/><rect x="750.01" y="262" width="3.49" height="80" fill="#989898"/><g filter="url(#blur1)">
<path d="M430 276 Q592 262 755 276 L755 281 Q592 267 430 281Z" fill="#fff" opacity="0.18"/>
<path d="M430 305 Q592 293 755 305 L755 322 Q592 308 430 322Z" fill="#fff" opacity="0.16"/>
<path d="M430 313 Q592 301 755 313 L755 322 Q592 308 430 322Z" fill="#000" opacity="0.10"/>
<path d="M430 306 Q592 294 755 306" fill="none" stroke="#f4f4f4" stroke-width="2.2" opacity="0.7"/>
<path d="M430 322 Q592 308 755 322 L755 335 Q592 322 430 335Z" fill="#fff" opacity="0.36"/>
<path d="M430 334.5 Q592 321.5 755 334.5" fill="none" stroke="#555" stroke-width="1.2" opacity="0.8"/>
<path d="M430 332 Q592 319 755 332" fill="none" stroke="#eeeeee" stroke-width="1" opacity="0.5"/>
</g></g>
<path d='M112 493 L151 480 L160.6 480 L172 473.4 C174.50 472.53 182.00 469.82 187.00 468.20 C192.00 466.57 197.00 465.12 202.00 463.63 C207.00 462.13 212.00 460.66 217.00 459.22 C222.00 457.78 227.00 456.37 232.00 454.98 C237.00 453.60 242.00 452.24 247.00 450.91 C252.00 449.58 257.00 448.28 262.00 447.00 C267.00 445.73 272.00 444.48 277.00 443.26 C282.00 442.04 287.00 440.85 292.00 439.68 C297.00 438.52 302.00 437.38 307.00 436.27 C312.00 435.16 317.00 434.07 322.00 433.02 C327.00 431.96 332.00 430.93 337.00 429.93 C342.00 428.93 347.00 427.96 352.00 427.01 C357.00 426.07 362.00 425.15 367.00 424.26 C372.00 423.37 377.00 422.50 382.00 421.67 C387.00 420.83 392.00 420.02 397.00 419.24 C402.00 418.46 407.00 417.70 412.00 416.98 C417.00 416.25 422.00 415.55 427.00 414.88 C432.00 414.21 437.00 413.57 442.00 412.95 C447.00 412.33 452.00 411.75 457.00 411.19 C462.00 410.63 467.00 410.09 472.00 409.59 C477.00 409.08 482.00 408.61 487.00 408.16 C492.00 407.71 497.00 407.29 502.00 406.89 C507.00 406.50 512.00 406.13 517.00 405.80 C522.00 405.46 527.00 405.15 532.00 404.87 C537.00 404.59 542.00 404.33 547.00 404.11 C552.00 403.88 557.00 403.69 562.00 403.52 C567.00 403.35 572.00 403.21 577.00 403.10 C582.00 402.99 587.00 402.91 592.00 402.85 C597.00 402.80 602.00 402.77 607.00 402.78 C612.00 402.78 617.00 402.81 622.00 402.87 C627.00 402.93 632.00 403.03 637.00 403.14 C642.00 403.26 647.00 403.41 652.00 403.59 C657.00 403.77 662.00 403.97 667.00 404.21 C672.00 404.45 677.00 404.71 682.00 405.01 C687.00 405.30 692.00 405.63 697.00 405.98 C702.00 406.34 707.00 406.72 712.00 407.14 C717.00 407.55 722.00 408.00 727.00 408.47 C732.00 408.95 737.00 409.45 742.00 409.99 C747.00 410.52 752.00 411.09 757.00 411.68 C762.00 412.28 767.00 412.91 772.00 413.56 C777.00 414.22 782.00 414.91 787.00 415.63 C792.00 416.35 797.00 417.10 802.00 417.88 C807.00 418.66 812.00 419.47 817.00 420.32 C822.00 421.16 827.00 422.04 832.00 422.94 C837.00 423.85 842.00 424.79 847.00 425.76 C852.00 426.73 857.00 427.73 862.00 428.77 C867.00 429.80 872.00 430.87 877.00 431.97 C882.00 433.07 887.00 434.20 892.00 435.36 C897.00 436.53 902.00 437.72 907.00 438.95 C912.00 440.18 917.00 441.45 922.00 442.74 C927.00 444.04 932.00 445.37 937.00 446.73 C942.00 448.09 947.00 449.49 952.00 450.92 C957.00 452.35 962.00 453.81 967.00 455.30 C972.00 456.80 977.00 458.33 982.00 459.90 C987.00 461.46 992.00 463.06 997.00 464.70 C1002.00 466.33 1007.00 468.00 1012.00 469.70 C1017.00 471.40 1022.00 473.14 1027.00 474.91 C1032.00 476.69 1037.00 478.50 1042.00 480.34 C1047.00 482.18 1052.00 484.06 1057.00 485.98 C1062.00 487.89 1069.00 490.59 1072.00 491.83 C1075.00 493.06 1074.50 493.14 1075.00 493.40 C1084 498 1091 503 1092 512 C1093 520 1092 526 1090 530.6 L1021.5 694 C1015 706 1006 713 997.5 713 L987.5 710.8 L954.3 698 L946 693 L934.4 691.5 C931.90 690.79 924.40 688.74 919.40 687.24 C914.40 685.73 909.40 684.03 904.40 682.47 C899.40 680.92 894.40 679.40 889.40 677.91 C884.40 676.43 879.40 674.98 874.40 673.56 C869.40 672.15 864.40 670.78 859.40 669.44 C854.40 668.11 849.40 666.81 844.40 665.56 C839.40 664.30 834.40 663.08 829.40 661.91 C824.40 660.73 819.40 659.60 814.40 658.51 C809.40 657.41 804.40 656.36 799.40 655.36 C794.40 654.35 789.40 653.38 784.40 652.46 C779.40 651.53 774.40 650.65 769.40 649.81 C764.40 648.98 759.40 648.18 754.40 647.43 C749.40 646.67 744.40 645.96 739.40 645.29 C734.40 644.62 729.40 644.00 724.40 643.41 C719.40 642.83 714.40 642.28 709.40 641.78 C704.40 641.28 699.40 640.82 694.40 640.40 C689.40 639.98 684.40 639.60 679.40 639.26 C674.40 638.93 669.40 638.63 664.40 638.37 C659.40 638.11 654.40 637.89 649.40 637.71 C644.40 637.53 639.40 637.39 634.40 637.28 C629.40 637.17 624.40 637.11 619.40 637.08 C614.40 637.05 609.40 637.05 604.40 637.10 C599.40 637.14 594.40 637.22 589.40 637.33 C584.40 637.44 579.40 637.59 574.40 637.77 C569.40 637.95 564.40 638.17 559.40 638.42 C554.40 638.67 549.40 638.95 544.40 639.27 C539.40 639.58 534.40 639.93 529.40 640.31 C524.40 640.69 519.40 641.10 514.40 641.54 C509.40 641.98 504.40 642.45 499.40 642.96 C494.40 643.46 489.40 643.99 484.40 644.56 C479.40 645.12 474.40 645.71 469.40 646.33 C464.40 646.96 459.40 647.61 454.40 648.29 C449.40 648.97 444.40 649.68 439.40 650.42 C434.40 651.16 429.40 651.93 424.40 652.72 C419.40 653.52 414.40 654.35 409.40 655.21 C404.40 656.06 399.40 656.95 394.40 657.87 C389.40 658.78 384.40 659.73 379.40 660.70 C374.40 661.68 369.40 662.69 364.40 663.73 C359.40 664.77 354.40 665.84 349.40 666.94 C344.40 668.04 339.40 669.18 334.40 670.35 C329.40 671.52 324.40 672.72 319.40 673.96 C314.40 675.20 309.40 676.48 304.40 677.79 C299.40 679.10 294.40 680.45 289.40 681.84 C284.40 683.24 279.40 684.67 274.40 686.14 C269.40 687.61 264.40 689.13 259.40 690.69 C254.40 692.25 249.40 693.86 244.40 695.51 C239.40 697.17 234.40 698.87 229.40 700.63 C224.40 702.39 219.40 704.20 214.40 706.06 C209.40 707.93 202.92 710.48 199.40 711.83 C195.88 713.19 194.32 713.81 193.30 714.20 L183.3 715.6 C172 714 163 706 158.4 696.4 L95.6 530.6 C93 524 93 516 95.6 508.3 C99 500 105 496 112 493 Z' fill="#00aeff"/>
</g><path d="M112 493 L151 480 L160.6 480 L172 473.4 C174.50 472.53 182.00 469.82 187.00 468.20 C192.00 466.57 197.00 465.12 202.00 463.63 C207.00 462.13 212.00 460.66 217.00 459.22 C222.00 457.78 227.00 456.37 232.00 454.98 C237.00 453.60 242.00 452.24 247.00 450.91 C252.00 449.58 257.00 448.28 262.00 447.00 C267.00 445.73 272.00 444.48 277.00 443.26 C282.00 442.04 287.00 440.85 292.00 439.68 C297.00 438.52 302.00 437.38 307.00 436.27 C312.00 435.16 317.00 434.07 322.00 433.02 C327.00 431.96 332.00 430.93 337.00 429.93 C342.00 428.93 347.00 427.96 352.00 427.01 C357.00 426.07 362.00 425.15 367.00 424.26 C372.00 423.37 377.00 422.50 382.00 421.67 C387.00 420.83 392.00 420.02 397.00 419.24 C402.00 418.46 407.00 417.70 412.00 416.98 C417.00 416.25 422.00 415.55 427.00 414.88 C432.00 414.21 437.00 413.57 442.00 412.95 C447.00 412.33 452.00 411.75 457.00 411.19 C462.00 410.63 467.00 410.09 472.00 409.59 C477.00 409.08 482.00 408.61 487.00 408.16 C492.00 407.71 497.00 407.29 502.00 406.89 C507.00 406.50 512.00 406.13 517.00 405.80 C522.00 405.46 527.00 405.15 532.00 404.87 C537.00 404.59 542.00 404.33 547.00 404.11 C552.00 403.88 557.00 403.69 562.00 403.52 C567.00 403.35 572.00 403.21 577.00 403.10 C582.00 402.99 587.00 402.91 592.00 402.85 C597.00 402.80 602.00 402.77 607.00 402.78 C612.00 402.78 617.00 402.81 622.00 402.87 C627.00 402.93 632.00 403.03 637.00 403.14 C642.00 403.26 647.00 403.41 652.00 403.59 C657.00 403.77 662.00 403.97 667.00 404.21 C672.00 404.45 677.00 404.71 682.00 405.01 C687.00 405.30 692.00 405.63 697.00 405.98 C702.00 406.34 707.00 406.72 712.00 407.14 C717.00 407.55 722.00 408.00 727.00 408.47 C732.00 408.95 737.00 409.45 742.00 409.99 C747.00 410.52 752.00 411.09 757.00 411.68 C762.00 412.28 767.00 412.91 772.00 413.56 C777.00 414.22 782.00 414.91 787.00 415.63 C792.00 416.35 797.00 417.10 802.00 417.88 C807.00 418.66 812.00 419.47 817.00 420.32 C822.00 421.16 827.00 422.04 832.00 422.94 C837.00 423.85 842.00 424.79 847.00 425.76 C852.00 426.73 857.00 427.73 862.00 428.77 C867.00 429.80 872.00 430.87 877.00 431.97 C882.00 433.07 887.00 434.20 892.00 435.36 C897.00 436.53 902.00 437.72 907.00 438.95 C912.00 440.18 917.00 441.45 922.00 442.74 C927.00 444.04 932.00 445.37 937.00 446.73 C942.00 448.09 947.00 449.49 952.00 450.92 C957.00 452.35 962.00 453.81 967.00 455.30 C972.00 456.80 977.00 458.33 982.00 459.90 C987.00 461.46 992.00 463.06 997.00 464.70 C1002.00 466.33 1007.00 468.00 1012.00 469.70 C1017.00 471.40 1022.00 473.14 1027.00 474.91 C1032.00 476.69 1037.00 478.50 1042.00 480.34 C1047.00 482.18 1052.00 484.06 1057.00 485.98 C1062.00 487.89 1069.00 490.59 1072.00 491.83 C1075.00 493.06 1074.50 493.14 1075.00 493.40 C1084 498 1091 503 1092 512 C1093 520 1092 526 1090 530.6 L1021.5 694 C1015 706 1006 713 997.5 713 L987.5 710.8 L954.3 698 L946 693 L934.4 691.5 C931.90 690.79 924.40 688.74 919.40 687.24 C914.40 685.73 909.40 684.03 904.40 682.47 C899.40 680.92 894.40 679.40 889.40 677.91 C884.40 676.43 879.40 674.98 874.40 673.56 C869.40 672.15 864.40 670.78 859.40 669.44 C854.40 668.11 849.40 666.81 844.40 665.56 C839.40 664.30 834.40 663.08 829.40 661.91 C824.40 660.73 819.40 659.60 814.40 658.51 C809.40 657.41 804.40 656.36 799.40 655.36 C794.40 654.35 789.40 653.38 784.40 652.46 C779.40 651.53 774.40 650.65 769.40 649.81 C764.40 648.98 759.40 648.18 754.40 647.43 C749.40 646.67 744.40 645.96 739.40 645.29 C734.40 644.62 729.40 644.00 724.40 643.41 C719.40 642.83 714.40 642.28 709.40 641.78 C704.40 641.28 699.40 640.82 694.40 640.40 C689.40 639.98 684.40 639.60 679.40 639.26 C674.40 638.93 669.40 638.63 664.40 638.37 C659.40 638.11 654.40 637.89 649.40 637.71 C644.40 637.53 639.40 637.39 634.40 637.28 C629.40 637.17 624.40 637.11 619.40 637.08 C614.40 637.05 609.40 637.05 604.40 637.10 C599.40 637.14 594.40 637.22 589.40 637.33 C584.40 637.44 579.40 637.59 574.40 637.77 C569.40 637.95 564.40 638.17 559.40 638.42 C554.40 638.67 549.40 638.95 544.40 639.27 C539.40 639.58 534.40 639.93 529.40 640.31 C524.40 640.69 519.40 641.10 514.40 641.54 C509.40 641.98 504.40 642.45 499.40 642.96 C494.40 643.46 489.40 643.99 484.40 644.56 C479.40 645.12 474.40 645.71 469.40 646.33 C464.40 646.96 459.40 647.61 454.40 648.29 C449.40 648.97 444.40 649.68 439.40 650.42 C434.40 651.16 429.40 651.93 424.40 652.72 C419.40 653.52 414.40 654.35 409.40 655.21 C404.40 656.06 399.40 656.95 394.40 657.87 C389.40 658.78 384.40 659.73 379.40 660.70 C374.40 661.68 369.40 662.69 364.40 663.73 C359.40 664.77 354.40 665.84 349.40 666.94 C344.40 668.04 339.40 669.18 334.40 670.35 C329.40 671.52 324.40 672.72 319.40 673.96 C314.40 675.20 309.40 676.48 304.40 677.79 C299.40 679.10 294.40 680.45 289.40 681.84 C284.40 683.24 279.40 684.67 274.40 686.14 C269.40 687.61 264.40 689.13 259.40 690.69 C254.40 692.25 249.40 693.86 244.40 695.51 C239.40 697.17 234.40 698.87 229.40 700.63 C224.40 702.39 219.40 704.20 214.40 706.06 C209.40 707.93 202.92 710.48 199.40 711.83 C195.88 713.19 194.32 713.81 193.30 714.20 L183.3 715.6 C172 714 163 706 158.4 696.4 L95.6 530.6 C93 524 93 516 95.6 508.3 C99 500 105 496 112 493 Z" fill="none" stroke="#1f7ae0" stroke-width="1.1" opacity="0.9"/><path d="M466 403 L608 403 M625.5 403 L780 405.2" stroke="#3d8ae6" stroke-width="1"/><circle cx="466" cy="403" r="2.8" fill="#fff" stroke="#3d8ae6" stroke-width="1.1"/><circle cx="780" cy="405.2" r="2.8" fill="#fff" stroke="#3d8ae6" stroke-width="1.1"/><rect x="605" y="400" width="6" height="6" fill="#fff" stroke="#3d8ae6" stroke-width="1.1"/><rect x="622.5" y="400" width="6" height="6" fill="#fff" stroke="#3d8ae6" stroke-width="1.1"/><rect x="109.5" y="490.5" width="5" height="5" fill="#1c7ce6" stroke="#4aa0f5" stroke-width="0.6"/><rect x="148.5" y="477.5" width="5" height="5" fill="#1c7ce6" stroke="#4aa0f5" stroke-width="0.6"/><rect x="158.1" y="477.5" width="5" height="5" fill="#1c7ce6" stroke="#4aa0f5" stroke-width="0.6"/><rect x="169.5" y="470.9" width="5" height="5" fill="#1c7ce6" stroke="#4aa0f5" stroke-width="0.6"/><rect x="93.1" y="505.8" width="5" height="5" fill="#1c7ce6" stroke="#4aa0f5" stroke-width="0.6"/><rect x="93.1" y="528.1" width="5" height="5" fill="#1c7ce6" stroke="#4aa0f5" stroke-width="0.6"/><rect x="155.9" y="693.9" width="5" height="5" fill="#1c7ce6" stroke="#4aa0f5" stroke-width="0.6"/><rect x="180.8" y="713.1" width="5" height="5" fill="#1c7ce6" stroke="#4aa0f5" stroke-width="0.6"/><rect x="190.8" y="711.7" width="5" height="5" fill="#1c7ce6" stroke="#4aa0f5" stroke-width="0.6"/><rect x="1072.5" y="490.8" width="5" height="5" fill="#1c7ce6" stroke="#4aa0f5" stroke-width="0.6"/><rect x="1087.5" y="505.8" width="5" height="5" fill="#1c7ce6" stroke="#4aa0f5" stroke-width="0.6"/><rect x="1087.5" y="528.1" width="5" height="5" fill="#1c7ce6" stroke="#4aa0f5" stroke-width="0.6"/><rect x="1019.0" y="691.5" width="5" height="5" fill="#1c7ce6" stroke="#4aa0f5" stroke-width="0.6"/><rect x="995.0" y="710.5" width="5" height="5" fill="#1c7ce6" stroke="#4aa0f5" stroke-width="0.6"/><rect x="984.8" y="708.3" width="5" height="5" fill="#1c7ce6" stroke="#4aa0f5" stroke-width="0.6"/><rect x="951.8" y="695.5" width="5" height="5" fill="#1c7ce6" stroke="#4aa0f5" stroke-width="0.6"/><rect x="943.5" y="690.5" width="5" height="5" fill="#1c7ce6" stroke="#4aa0f5" stroke-width="0.6"/><rect x="931.9" y="689.0" width="5" height="5" fill="#1c7ce6" stroke="#4aa0f5" stroke-width="0.6"/><rect x="603.5" y="634.0" width="5" height="5" fill="#1c7ce6" stroke="#4aa0f5" stroke-width="0.6"/></g><rect x="1263" y="88" width="279" height="156" fill="#fff" stroke="#ee3b3b" stroke-width="2"/><g transform="translate(1262.3 87.5) scale(0.264 0.264) translate(-64 -213)"><use href="#art"/></g></svg>
<svg class="a" style="left:1190px;top:51px;" width="8" height="6" viewBox="0 0 8 6"><path d="M7 1L5 3l2 2M4 1L2 3l2 2" fill="none" stroke="#d8d8d8" stroke-width="1.1"/></svg>
<svg class="a" style="left:1587px;top:51px;" width="8" height="6" viewBox="0 0 8 6"><path d="M1 1l2 2-2 2M4 1l2 2-2 2" fill="none" stroke="#d8d8d8" stroke-width="1.1"/></svg>
<div class="a" style="left:1173px;top:116px;width:31px;height:1px;background:#3c3c3c;"></div>
<div class="a" style="left:1173px;top:150px;width:31px;height:1px;background:#3c3c3c;"></div>
<div class="a" style="left:1173px;top:184px;width:31px;height:1px;background:#3c3c3c;"></div>
<div class="a" style="left:1173px;top:242px;width:31px;height:1px;background:#3c3c3c;"></div>
<div class="a" style="left:1173px;top:276px;width:31px;height:1px;background:#3c3c3c;"></div>
<div class="a" style="left:1173px;top:333px;width:31px;height:1px;background:#3c3c3c;"></div>
<div class="a" style="left:1173px;top:392px;width:31px;height:1px;background:#3c3c3c;"></div>
<div class="a" style="left:1173px;top:427px;width:31px;height:1px;background:#3c3c3c;"></div>
<div class="a" style="left:1173px;top:460px;width:31px;height:1px;background:#3c3c3c;"></div>
<div class="a" style="left:1173px;top:493px;width:31px;height:1px;background:#3c3c3c;"></div>
<div class="a" style="left:1173px;top:527px;width:31px;height:1px;background:#3c3c3c;"></div>
<svg class="a" style="left:1180px;top:61px;" width="17" height="3" viewBox="0 0 17 3"><rect x="0" y="0.5" width="1" height="2" fill="#464646"/><rect x="2" y="0.5" width="1" height="2" fill="#464646"/><rect x="4" y="0.5" width="1" height="2" fill="#464646"/><rect x="6" y="0.5" width="1" height="2" fill="#464646"/><rect x="8" y="0.5" width="1" height="2" fill="#464646"/><rect x="10" y="0.5" width="1" height="2" fill="#464646"/><rect x="12" y="0.5" width="1" height="2" fill="#464646"/><rect x="14" y="0.5" width="1" height="2" fill="#464646"/></svg>
<svg class="a" style="left:1180px;top:120px;" width="17" height="3" viewBox="0 0 17 3"><rect x="0" y="0.5" width="1" height="2" fill="#464646"/><rect x="2" y="0.5" width="1" height="2" fill="#464646"/><rect x="4" y="0.5" width="1" height="2" fill="#464646"/><rect x="6" y="0.5" width="1" height="2" fill="#464646"/><rect x="8" y="0.5" width="1" height="2" fill="#464646"/><rect x="10" y="0.5" width="1" height="2" fill="#464646"/><rect x="12" y="0.5" width="1" height="2" fill="#464646"/><rect x="14" y="0.5" width="1" height="2" fill="#464646"/></svg>
<svg class="a" style="left:1180px;top:154px;" width="17" height="3" viewBox="0 0 17 3"><rect x="0" y="0.5" width="1" height="2" fill="#464646"/><rect x="2" y="0.5" width="1" height="2" fill="#464646"/><rect x="4" y="0.5" width="1" height="2" fill="#464646"/><rect x="6" y="0.5" width="1" height="2" fill="#464646"/><rect x="8" y="0.5" width="1" height="2" fill="#464646"/><rect x="10" y="0.5" width="1" height="2" fill="#464646"/><rect x="12" y="0.5" width="1" height="2" fill="#464646"/><rect x="14" y="0.5" width="1" height="2" fill="#464646"/></svg>
<svg class="a" style="left:1180px;top:188px;" width="17" height="3" viewBox="0 0 17 3"><rect x="0" y="0.5" width="1" height="2" fill="#464646"/><rect x="2" y="0.5" width="1" height="2" fill="#464646"/><rect x="4" y="0.5" width="1" height="2" fill="#464646"/><rect x="6" y="0.5" width="1" height="2" fill="#464646"/><rect x="8" y="0.5" width="1" height="2" fill="#464646"/><rect x="10" y="0.5" width="1" height="2" fill="#464646"/><rect x="12" y="0.5" width="1" height="2" fill="#464646"/><rect x="14" y="0.5" width="1" height="2" fill="#464646"/></svg>
<svg class="a" style="left:1180px;top:246px;" width="17" height="3" viewBox="0 0 17 3"><rect x="0" y="0.5" width="1" height="2" fill="#464646"/><rect x="2" y="0.5" width="1" height="2" fill="#464646"/><rect x="4" y="0.5" width="1" height="2" fill="#464646"/><rect x="6" y="0.5" width="1" height="2" fill="#464646"/><rect x="8" y="0.5" width="1" height="2" fill="#464646"/><rect x="10" y="0.5" width="1" height="2" fill="#464646"/><rect x="12" y="0.5" width="1" height="2" fill="#464646"/><rect x="14" y="0.5" width="1" height="2" fill="#464646"/></svg>
<svg class="a" style="left:1180px;top:280px;" width="17" height="3" viewBox="0 0 17 3"><rect x="0" y="0.5" width="1" height="2" fill="#464646"/><rect x="2" y="0.5" width="1" height="2" fill="#464646"/><rect x="4" y="0.5" width="1" height="2" fill="#464646"/><rect x="6" y="0.5" width="1" height="2" fill="#464646"/><rect x="8" y="0.5" width="1" height="2" fill="#464646"/><rect x="10" y="0.5" width="1" height="2" fill="#464646"/><rect x="12" y="0.5" width="1" height="2" fill="#464646"/><rect x="14" y="0.5" width="1" height="2" fill="#464646"/></svg>
<svg class="a" style="left:1180px;top:337px;" width="17" height="3" viewBox="0 0 17 3"><rect x="0" y="0.5" width="1" height="2" fill="#464646"/><rect x="2" y="0.5" width="1" height="2" fill="#464646"/><rect x="4" y="0.5" width="1" height="2" fill="#464646"/><rect x="6" y="0.5" width="1" height="2" fill="#464646"/><rect x="8" y="0.5" width="1" height="2" fill="#464646"/><rect x="10" y="0.5" width="1" height="2" fill="#464646"/><rect x="12" y="0.5" width="1" height="2" fill="#464646"/><rect x="14" y="0.5" width="1" height="2" fill="#464646"/></svg>
<svg class="a" style="left:1180px;top:396px;" width="17" height="3" viewBox="0 0 17 3"><rect x="0" y="0.5" width="1" height="2" fill="#464646"/><rect x="2" y="0.5" width="1" height="2" fill="#464646"/><rect x="4" y="0.5" width="1" height="2" fill="#464646"/><rect x="6" y="0.5" width="1" height="2" fill="#464646"/><rect x="8" y="0.5" width="1" height="2" fill="#464646"/><rect x="10" y="0.5" width="1" height="2" fill="#464646"/><rect x="12" y="0.5" width="1" height="2" fill="#464646"/><rect x="14" y="0.5" width="1" height="2" fill="#464646"/></svg>
<svg class="a" style="left:1180px;top:431px;" width="17" height="3" viewBox="0 0 17 3"><rect x="0" y="0.5" width="1" height="2" fill="#464646"/><rect x="2" y="0.5" width="1" height="2" fill="#464646"/><rect x="4" y="0.5" width="1" height="2" fill="#464646"/><rect x="6" y="0.5" width="1" height="2" fill="#464646"/><rect x="8" y="0.5" width="1" height="2" fill="#464646"/><rect x="10" y="0.5" width="1" height="2" fill="#464646"/><rect x="12" y="0.5" width="1" height="2" fill="#464646"/><rect x="14" y="0.5" width="1" height="2" fill="#464646"/></svg>
<svg class="a" style="left:1180px;top:464px;" width="17" height="3" viewBox="0 0 17 3"><rect x="0" y="0.5" width="1" height="2" fill="#464646"/><rect x="2" y="0.5" width="1" height="2" fill="#464646"/><rect x="4" y="0.5" width="1" height="2" fill="#464646"/><rect x="6" y="0.5" width="1" height="2" fill="#464646"/><rect x="8" y="0.5" width="1" height="2" fill="#464646"/><rect x="10" y="0.5" width="1" height="2" fill="#464646"/><rect x="12" y="0.5" width="1" height="2" fill="#464646"/><rect x="14" y="0.5" width="1" height="2" fill="#464646"/></svg>
<svg class="a" style="left:1180px;top:497px;" width="17" height="3" viewBox="0 0 17 3"><rect x="0" y="0.5" width="1" height="2" fill="#464646"/><rect x="2" y="0.5" width="1" height="2" fill="#464646"/><rect x="4" y="0.5" width="1" height="2" fill="#464646"/><rect x="6" y="0.5" width="1" height="2" fill="#464646"/><rect x="8" y="0.5" width="1" height="2" fill="#464646"/><rect x="10" y="0.5" width="1" height="2" fill="#464646"/><rect x="12" y="0.5" width="1" height="2" fill="#464646"/><rect x="14" y="0.5" width="1" height="2" fill="#464646"/></svg>
<svg class="a" style="left:1180px;top:69px;" width="17" height="17" viewBox="0 0 17 17"><rect x="3.5" y="1.5" width="4" height="4" fill="none" stroke="#d2d2d2" stroke-width="1.1"/><circle cx="5.5" cy="3.5" r="0.8" fill="#d2d2d2"/><rect x="3.5" y="6.5" width="4" height="4" fill="none" stroke="#d2d2d2" stroke-width="1.1"/><circle cx="5.5" cy="8.5" r="0.8" fill="#d2d2d2"/><rect x="3" y="11" width="5" height="5" fill="#d2d2d2"/><path d="M11 4C15 4.5 15.5 11.5 10.5 15" fill="none" stroke="#d2d2d2" stroke-width="1.3"/><path d="M9.3 2.2L13 1.2 12.2 5.5z" fill="#d2d2d2"/></svg>
<svg class="a" style="left:1180px;top:93px;" width="17" height="17" viewBox="0 0 17 17"><path d="M2 3h12v7H8l-3 3v-3H2z" fill="#d2d2d2"/></svg>
<svg class="a" style="left:1180px;top:127px;" width="17" height="17" viewBox="0 0 17 17"><circle cx="9" cy="8" r="5.5" fill="none" stroke="#d2d2d2" stroke-width="1.3"/><path d="M9 4.5V8l2 2.5" fill="none" stroke="#d2d2d2" stroke-width="1.4"/><path d="M1.5 7l2.5-2 1.5 3z" fill="#d2d2d2"/></svg>
<svg class="a" style="left:1180px;top:161px;" width="17" height="17" viewBox="0 0 17 17"><circle cx="8" cy="8" r="6" fill="none" stroke="#d2d2d2" stroke-width="1.3"/><rect x="7.3" y="6.5" width="1.5" height="5" fill="#d2d2d2"/><circle cx="8" cy="4.7" r="0.9" fill="#d2d2d2"/></svg>
<svg class="a" style="left:1180px;top:195px;" width="17" height="17" viewBox="0 0 17 17"><path d="M1 2h2M1 5h2M1 8h2M4 2h2M4 5h2" stroke="#d2d2d2" stroke-width="1"/><path d="M15 4L9 10" stroke="#d2d2d2" stroke-width="2"/><path d="M8 10c-2 0-3 2-3 4 2 0 5-1 5-3z" fill="#d2d2d2"/></svg>
<svg class="a" style="left:1180px;top:220px;" width="17" height="17" viewBox="0 0 17 17"><path d="M1 4h14M1 12h9" stroke="#d2d2d2" stroke-width="1.2"/><circle cx="5" cy="4" r="2.2" fill="#d2d2d2"/><path d="M10 9c3 0 5 1.5 5 3.5s-2 3.5-5 3.5z" fill="#d2d2d2"/></svg>
<svg class="a" style="left:1180px;top:253px;" width="17" height="17" viewBox="0 0 17 17"><path d="M7 2l-5 8h10z" fill="#d2d2d2"/><circle cx="10" cy="10" r="4.5" fill="none" stroke="#d2d2d2" stroke-width="1.3"/><path d="M4.5 8l1.5-1.5 1 2" fill="none" stroke="#d2d2d2"/></svg>
<svg class="a" style="left:1180px;top:287px;" width="17" height="17" viewBox="0 0 17 17"><path d="M1 15L6 2h1.5l5 13M3 10h7" fill="none" stroke="#d2d2d2" stroke-width="1.3"/><path d="M14.5 2v13" stroke="#d2d2d2" stroke-width="1"/></svg>
<svg class="a" style="left:1180px;top:310px;" width="17" height="17" viewBox="0 0 17 17"><path d="M7 2h7M9 2v13M12 2v13" stroke="#d2d2d2" stroke-width="1.3"/><path d="M8 2a3.3 3.3 0 0 0 0 7z" fill="#d2d2d2"/></svg>
<svg class="a" style="left:1180px;top:344px;" width="17" height="17" viewBox="0 0 17 17"><path d="M10 1h5M11.5 1v9M13.5 1v9" stroke="#d2d2d2" stroke-width="1.1"/><path d="M11 1a2.5 2.5 0 0 0 0 5z" fill="#d2d2d2"/><rect x="1" y="8" width="5" height="5" fill="none" stroke="#d2d2d2"/><rect x="3.5" y="10.5" width="5" height="5" fill="#d2d2d2"/></svg>
<svg class="a" style="left:1180px;top:369px;" width="17" height="17" viewBox="0 0 17 17"><path d="M8 10l3.5-9h1l3.5 9M9.5 7h5" fill="none" stroke="#d2d2d2" stroke-width="1.2"/><rect x="1" y="8" width="5" height="5" fill="none" stroke="#d2d2d2"/><rect x="3.5" y="10.5" width="5" height="5" fill="#d2d2d2"/></svg>
<svg class="a" style="left:1180px;top:402px;" width="17" height="17" viewBox="0 0 17 17"><path d="M2 15c3-1 5-5 7-13 1 4 2 9 5 13M5 10h7" fill="none" stroke="#d2d2d2" stroke-width="1.3"/><path d="M3 4c2-2 5-2 6-2" fill="none" stroke="#d2d2d2" stroke-width="1"/></svg>
<svg class="a" style="left:1180px;top:437px;" width="17" height="17" viewBox="0 0 17 17"><path d="M8 1l6 3.5v7L8 15l-6-3.5v-7z" fill="none" stroke="#d2d2d2" stroke-width="1.3"/><path d="M2 4.5L8 8l6-3.5M8 8v7" fill="none" stroke="#d2d2d2" stroke-width="1.2"/></svg>
<svg class="a" style="left:1180px;top:470px;" width="17" height="17" viewBox="0 0 17 17"><path d="M1 3h14M1 8h14M1 13h14" stroke="#d2d2d2" stroke-width="1.1"/><circle cx="10" cy="3" r="2" fill="#535353" stroke="#d2d2d2"/><circle cx="5" cy="8" r="2" fill="#535353" stroke="#d2d2d2"/><circle cx="9" cy="13" r="2" fill="#535353" stroke="#d2d2d2"/></svg>
<svg class="a" style="left:1180px;top:505px;" width="17" height="17" viewBox="0 0 17 17"><rect x="2" y="2" width="12" height="13" fill="none" stroke="#d2d2d2" stroke-width="1.2"/><rect x="4" y="1" width="10" height="12" fill="none" stroke="#d2d2d2" stroke-width="1"/><path d="M9 3v5l1.5-1.2L12 8V3z" fill="#d2d2d2"/></svg>
<span id="t47" class="t" style="left:1214px;top:64.88px;font-size:9px;color:#f0f0f0;font-weight:bold;transform:scaleX(0.9394);">Navigator</span>
<svg class="a" style="left:1585px;top:66px;" width="11" height="9" viewBox="0 0 11 9"><rect x="0" y="0.5" width="10" height="1.6" fill="#a8a8a8"/><rect x="0" y="3.5" width="10" height="1.6" fill="#a8a8a8"/><rect x="0" y="6.5" width="10" height="1.6" fill="#a8a8a8"/></svg>
<div class="a" style="left:1207px;top:249px;width:392px;height:1px;background:#474747;"></div>
<div class="a" style="left:1207px;top:270px;width:392px;height:2px;background:#3e3e3e;"></div>
<span id="t48" class="t" style="left:1211px;top:255.80px;font-size:8.5px;color:#e0e0e0;transform:scaleX(0.8815);">90%</span>
<svg class="a" style="left:1259px;top:255px;" width="11" height="6" viewBox="0 0 11 6"><path d="M0.5 5.5l3-3 1.5 1 2-3 3.5 5z" fill="#e6e6e6"/></svg>
<div class="a" style="left:1280px;top:257px;width:277px;height:2px;background:#6e6e6e;"></div>
<svg class="a" style="left:1409px;top:256px;" width="11" height="13" viewBox="0 0 11 13"><path d="M5.5 1L10 7.5V12H1V7.5z" fill="#f2f2f2" stroke="#3a3a3a" stroke-width="0.6"/></svg>
<svg class="a" style="left:1563px;top:254px;" width="17" height="10" viewBox="0 0 17 10"><path d="M0.5 9.5l5-5 2 1.5 3.5-5 5.5 8.5z" fill="#e6e6e6"/></svg>
<div class="a" style="left:1246px;top:272px;width:1px;height:24px;background:#3a3a3a;"></div>
<div class="a" style="left:1295px;top:272px;width:1px;height:24px;background:#3a3a3a;"></div>
<div class="a" style="left:1332px;top:272px;width:1px;height:24px;background:#3a3a3a;"></div>
<span id="t49" class="t" style="left:1213.75px;top:278.55px;font-size:8.5px;color:#f2f2f2;font-weight:bold;transform:scaleX(0.9208);">Layers</span>
<span id="t50" class="t" style="left:1253px;top:278.55px;font-size:8.5px;color:#a6a6a6;font-weight:bold;transform:scaleX(0.9277);">Channels</span>
<span id="t51" class="t" style="left:1303px;top:278.55px;font-size:8.5px;color:#a6a6a6;font-weight:bold;transform:scaleX(0.9069);">Paths</span>
<svg class="a" style="left:1585px;top:280px;" width="11" height="9" viewBox="0 0 11 9"><rect x="0" y="0.5" width="10" height="1.6" fill="#a8a8a8"/><rect x="0" y="3.5" width="10" height="1.6" fill="#a8a8a8"/><rect x="0" y="6.5" width="10" height="1.6" fill="#a8a8a8"/></svg>
<div class="a" style="left:1210px;top:303px;width:72px;height:16px;background:#484848;border:1px solid #4e4e4e;border-radius:2px"></div>
<svg class="a" style="left:1215px;top:306px;" width="10" height="11" viewBox="0 0 10 11"><circle cx="4" cy="4" r="3" fill="none" stroke="#e4e4e4" stroke-width="1.4"/><path d="M6 6l3.3 3.3" stroke="#e4e4e4" stroke-width="1.8"/></svg>
<span id="t52" class="t" style="left:1228px;top:308.05px;font-size:8.8px;color:#e6e6e6;transform:scaleX(0.9654);">Kind</span>
<svg class="a" style="left:1271px;top:310px;" width="8" height="5" viewBox="0 0 8 5"><path d="M1 1l3.0 3l3.0 -3" fill="none" stroke="#cfcfcf" stroke-width="1.1"/></svg>
<svg class="a" style="left:1290px;top:304px;" width="14" height="13" viewBox="0 0 14 13"><rect x="1" y="2" width="12" height="9" fill="none" stroke="#d4d4d4" stroke-width="1.1"/><path d="M3 9l2.5-3 1.5 1.5 2-2.5L11 9z" fill="#d4d4d4"/></svg>
<svg class="a" style="left:1311px;top:305px;" width="13" height="13" viewBox="0 0 13 13"><circle cx="6.5" cy="6.5" r="5" fill="none" stroke="#d4d4d4" stroke-width="1.3"/><path d="M10 3L3 10a5 5 0 0 0 7-7z" fill="#d4d4d4"/></svg>
<svg class="a" style="left:1331px;top:305px;" width="13" height="12" viewBox="0 0 13 12"><path d="M1 1h11v3h-1l-.7-1.5H7.3V10l1.7.3V11H4v-.7l1.7-.3V2.5H2.7L2 4H1z" fill="#d8d8d8"/></svg>
<svg class="a" style="left:1350px;top:304px;" width="14" height="14" viewBox="0 0 14 14"><rect x="2.5" y="2.5" width="9" height="9" fill="none" stroke="#d4d4d4" stroke-width="1.2"/><rect x="1" y="1" width="3" height="3" fill="#d4d4d4"/><rect x="10" y="1" width="3" height="3" fill="#d4d4d4"/><rect x="1" y="10" width="3" height="3" fill="#d4d4d4"/><rect x="10" y="10" width="3" height="3" fill="#d4d4d4"/></svg>
<svg class="a" style="left:1371px;top:304px;" width="13" height="14" viewBox="0 0 13 14"><path d="M5 1h5l2 2v9H9" fill="none" stroke="#d4d4d4" stroke-width="1.2"/><rect x="1" y="7" width="6" height="6" fill="#d4d4d4"/><path d="M2 7V5.5a2 2 0 0 1 4 0V7" fill="none" stroke="#d4d4d4"/></svg>
<svg class="a" style="left:1391px;top:302px;" width="10" height="20" viewBox="0 0 10 20"><rect x="1" y="1" width="8" height="18" rx="4" fill="#474747"/><circle cx="5" cy="5" r="3.7" fill="#e8e8e8"/></svg>
<div class="a" style="left:1207px;top:322px;width:392px;height:1px;background:#4a4a4a;"></div>
<div class="a" style="left:1210px;top:326px;width:107px;height:16px;background:#484848;border:1px solid #4e4e4e;border-radius:2px"></div>
<span id="t53" class="t" style="left:1216px;top:330.75px;font-size:8.8px;color:#e6e6e6;transform:scaleX(0.9168);">Normal</span>
<svg class="a" style="left:1306px;top:333px;" width="8" height="5" viewBox="0 0 8 5"><path d="M1 1l3.0 3l3.0 -3" fill="none" stroke="#cfcfcf" stroke-width="1.1"/></svg>
<span id="t54" class="t" style="left:1322px;top:331.00px;font-size:8.5px;color:#dedede;transform:scaleX(0.9619);">Opacity:</span>
<div class="a" style="left:1357px;top:327px;width:29px;height:15px;background:#454545;border-radius:2px"></div>
<div class="a" style="left:1387px;top:327px;width:11px;height:15px;background:#454545;border-radius:2px"></div>
<span id="t55" class="t" style="left:1361px;top:330.75px;font-size:8.8px;color:#e6e6e6;transform:scaleX(0.9333);">100%</span>
<svg class="a" style="left:1388px;top:333px;" width="8" height="5" viewBox="0 0 8 5"><path d="M1 1l3.0 3l3.0 -3" fill="none" stroke="#cfcfcf" stroke-width="1.1"/></svg>
<div class="a" style="left:1207px;top:345px;width:392px;height:1px;background:#4a4a4a;"></div>
<span id="t56" class="t" style="left:1211px;top:353.80px;font-size:8.5px;color:#dedede;transform:scaleX(0.9839);">Lock:</span>
<svg class="a" style="left:1238px;top:351px;" width="12" height="11" viewBox="0 0 12 11"><rect x="1" y="1" width="9" height="9" fill="none" stroke="#bdbdbd" stroke-width="0.9"/><rect x="2" y="2" width="2.5" height="2.5" fill="#bdbdbd"/><rect x="6.5" y="2" width="2.5" height="2.5" fill="#bdbdbd"/><rect x="4.3" y="4.3" width="2.5" height="2.5" fill="#bdbdbd"/><rect x="2" y="6.5" width="2.5" height="2.5" fill="#bdbdbd"/><rect x="6.5" y="6.5" width="2.5" height="2.5" fill="#bdbdbd"/></svg>
<svg class="a" style="left:1256px;top:350px;" width="12" height="14" viewBox="0 0 12 14"><path d="M11 1L5 8" stroke="#9a9a9a" stroke-width="1.8"/><path d="M4.5 8c-2 0-3 2-3 4.5 2 0 4.5-1 4.5-3z" fill="#9a9a9a"/></svg>
<svg class="a" style="left:1274px;top:350px;" width="14" height="14" viewBox="0 0 14 14"><path d="M7 1v12M1 7h12" stroke="#d6d6d6" stroke-width="1.4"/><path d="M7 0l2.3 2.7H4.7zM7 14l2.3-2.7H4.7zM0 7l2.7-2.3v4.6zM14 7l-2.7-2.3v4.6z" fill="#d6d6d6"/></svg>
<svg class="a" style="left:1292px;top:350px;" width="15" height="14" viewBox="0 0 15 14"><path d="M4 1v10h10M1 4h10v10" fill="none" stroke="#d6d6d6" stroke-width="1.2"/><path d="M11 1l2 2" stroke="#d6d6d6"/></svg>
<svg class="a" style="left:1311px;top:350px;" width="12" height="14" viewBox="0 0 12 14"><rect x="1.5" y="6" width="9" height="7" fill="#dcdcdc"/><path d="M3.5 6V4a2.5 2.5 0 0 1 5 0v2" fill="none" stroke="#dcdcdc" stroke-width="1.5"/><rect x="5.3" y="8.5" width="1.4" height="2.4" fill="#555"/></svg>
<span id="t57" class="t" style="left:1341px;top:353.80px;font-size:8.5px;color:#dedede;transform:scaleX(0.9067);">Fill:</span>
<div class="a" style="left:1357px;top:350px;width:29px;height:15px;background:#454545;border-radius:2px"></div>
<div class="a" style="left:1387px;top:350px;width:11px;height:15px;background:#454545;border-radius:2px"></div>
<span id="t58" class="t" style="left:1361px;top:353.75px;font-size:8.8px;color:#e6e6e6;transform:scaleX(0.9333);">100%</span>
<svg class="a" style="left:1388px;top:356px;" width="8" height="5" viewBox="0 0 8 5"><path d="M1 1l3.0 3l3.0 -3" fill="none" stroke="#cfcfcf" stroke-width="1.1"/></svg>
<div class="a" style="left:1207px;top:368px;width:392px;height:1px;background:#4a4a4a;"></div>
<div class="a" style="left:1207px;top:371px;width:379px;height:23px;background:#535353;"></div>
<div class="a" style="left:1232px;top:371px;width:354px;height:22px;background:#6a6a6a;"></div>
<div class="a" style="left:1207px;top:393px;width:378px;height:1px;background:#4b4b4b;"></div>
<div class="a" style="left:1231px;top:371px;width:1px;height:22px;background:#4b4b4b;"></div>
<svg class="a" style="left:1212px;top:376px;" width="15" height="12" viewBox="0 0 15 12"><path d="M1 6c2-3.2 4-4.5 6.5-4.5S12 2.8 14 6c-2 3.2-4 4.5-6.5 4.5S3 9.2 1 6z" fill="#e4e4e4"/><circle cx="7.5" cy="6" r="2.6" fill="#535353"/><circle cx="7.5" cy="6" r="1.5" fill="#e4e4e4"/><circle cx="8.3" cy="5.2" r="0.6" fill="#535353"/></svg>
<svg class="a" style="left:1233px;top:372px;" width="31" height="21" viewBox="0 0 31 21"><defs><pattern id="chk" width="8" height="8" patternUnits="userSpaceOnUse"><rect width="8" height="8" fill="#fff"/><rect width="4" height="4" fill="#d8d8d8"/><rect x="4" y="4" width="4" height="4" fill="#d8d8d8"/></pattern></defs><rect x="3" y="3" width="13" height="15" fill="url(#chk)"/><path d="M3.5 10c3-1.5 8-2 12.5-2.5v5c-4 .5-8 1-12.5 2z" fill="#00aaff"/><rect x="16" y="3" width="12" height="15" fill="#3c3c3c"/><rect x="19" y="6.5" width="7" height="7" fill="#6a6a6a" stroke="#d4d4d4" stroke-width="1.2"/><rect x="2" y="2" width="27" height="17" fill="none" stroke="#2e2e2e" stroke-width="1"/><path d="M0.8 5V0.8H6M25 0.8h5.2V5M0.8 16v4.2H6M25 20.2h5.2V16" fill="none" stroke="#e8e8e8" stroke-width="1.3"/></svg>
<span id="t59" class="t" style="left:1269px;top:378.84px;font-size:8.7px;color:#e2e2e2;transform:scaleX(0.9552);">Shape</span>
<div class="a" style="left:1207px;top:394px;width:379px;height:23px;background:#535353;"></div>
<div class="a" style="left:1207px;top:416px;width:378px;height:1px;background:#4b4b4b;"></div>
<div class="a" style="left:1231px;top:394px;width:1px;height:22px;background:#4b4b4b;"></div>
<svg class="a" style="left:1212px;top:399px;" width="15" height="12" viewBox="0 0 15 12"><path d="M1 6c2-3.2 4-4.5 6.5-4.5S12 2.8 14 6c-2 3.2-4 4.5-6.5 4.5S3 9.2 1 6z" fill="#e4e4e4"/><circle cx="7.5" cy="6" r="2.6" fill="#535353"/><circle cx="7.5" cy="6" r="1.5" fill="#e4e4e4"/><circle cx="8.3" cy="5.2" r="0.6" fill="#535353"/></svg>
<svg class="a" style="left:1236px;top:398px;" width="26" height="15" viewBox="0 0 26 15"><defs><pattern id="chk" width="8" height="8" patternUnits="userSpaceOnUse"><rect width="8" height="8" fill="#fff"/><rect width="4" height="4" fill="#d8d8d8"/><rect x="4" y="4" width="4" height="4" fill="#d8d8d8"/></pattern></defs><rect x="0" y="0" width="26" height="15" fill="url(#chk)"/><rect x="10" y="1" width="6" height="13" fill="#b8b8b8"/><rect x="10" y="1" width="6" height="2" fill="#888"/><rect x="0.5" y="0.5" width="25" height="14" fill="none" stroke="#2e2e2e" stroke-width="1"/></svg>
<span id="t60" class="t" style="left:1269px;top:401.84px;font-size:8.7px;color:#e2e2e2;transform:scaleX(0.9412);">Cup</span>
<div class="a" style="left:1207px;top:418px;width:379px;height:23px;background:#535353;"></div>
<div class="a" style="left:1207px;top:440px;width:378px;height:1px;background:#4b4b4b;"></div>
<div class="a" style="left:1231px;top:418px;width:1px;height:22px;background:#4b4b4b;"></div>
<svg class="a" style="left:1212px;top:423px;" width="15" height="12" viewBox="0 0 15 12"><path d="M1 6c2-3.2 4-4.5 6.5-4.5S12 2.8 14 6c-2 3.2-4 4.5-6.5 4.5S3 9.2 1 6z" fill="#e4e4e4"/><circle cx="7.5" cy="6" r="2.6" fill="#535353"/><circle cx="7.5" cy="6" r="1.5" fill="#e4e4e4"/><circle cx="8.3" cy="5.2" r="0.6" fill="#535353"/></svg>
<svg class="a" style="left:1236px;top:422px;" width="26" height="15" viewBox="0 0 26 15"><defs><pattern id="chk" width="8" height="8" patternUnits="userSpaceOnUse"><rect width="8" height="8" fill="#fff"/><rect width="4" height="4" fill="#d8d8d8"/><rect x="4" y="4" width="4" height="4" fill="#d8d8d8"/></pattern></defs><rect x="0" y="0" width="26" height="15" fill="url(#chk)"/><rect x="0" y="0" width="26" height="15" fill="#fff" opacity="0.45"/><rect x="0.5" y="0.5" width="25" height="14" fill="none" stroke="#2e2e2e" stroke-width="1"/></svg>
<span id="t61" class="t" style="left:1269px;top:425.84px;font-size:8.7px;color:#e2e2e2;transform:scaleX(0.9214);">CutLines</span>
<div class="a" style="left:1207px;top:441px;width:379px;height:23px;background:#535353;"></div>
<div class="a" style="left:1207px;top:463px;width:378px;height:1px;background:#4b4b4b;"></div>
<div class="a" style="left:1231px;top:441px;width:1px;height:22px;background:#4b4b4b;"></div>
<svg class="a" style="left:1212px;top:446px;" width="15" height="12" viewBox="0 0 15 12"><path d="M1 6c2-3.2 4-4.5 6.5-4.5S12 2.8 14 6c-2 3.2-4 4.5-6.5 4.5S3 9.2 1 6z" fill="#e4e4e4"/><circle cx="7.5" cy="6" r="2.6" fill="#535353"/><circle cx="7.5" cy="6" r="1.5" fill="#e4e4e4"/><circle cx="8.3" cy="5.2" r="0.6" fill="#535353"/></svg>
<svg class="a" style="left:1236px;top:445px;" width="26" height="15" viewBox="0 0 26 15"><defs><pattern id="chk" width="8" height="8" patternUnits="userSpaceOnUse"><rect width="8" height="8" fill="#fff"/><rect width="4" height="4" fill="#d8d8d8"/><rect x="4" y="4" width="4" height="4" fill="#d8d8d8"/></pattern></defs><rect x="0" y="0" width="26" height="15" fill="#f0f0f0"/><rect x="13" y="2" width="13" height="13" fill="#3a3a3a"/><path d="M16 6h5v6h-5zM18 4h5v6" fill="none" stroke="#e0e0e0" stroke-width="1"/><rect x="0.5" y="0.5" width="25" height="14" fill="none" stroke="#2e2e2e" stroke-width="1"/></svg>
<span id="t62" class="t" style="left:1269px;top:448.84px;font-size:8.7px;color:#e2e2e2;transform:scaleX(0.9576);">Design</span>
<div class="a" style="left:1207px;top:464px;width:379px;height:23px;background:#535353;"></div>
<div class="a" style="left:1207px;top:486px;width:378px;height:1px;background:#4b4b4b;"></div>
<div class="a" style="left:1231px;top:464px;width:1px;height:22px;background:#4b4b4b;"></div>
<svg class="a" style="left:1212px;top:469px;" width="15" height="12" viewBox="0 0 15 12"><path d="M1 6c2-3.2 4-4.5 6.5-4.5S12 2.8 14 6c-2 3.2-4 4.5-6.5 4.5S3 9.2 1 6z" fill="#e4e4e4"/><circle cx="7.5" cy="6" r="2.6" fill="#535353"/><circle cx="7.5" cy="6" r="1.5" fill="#e4e4e4"/><circle cx="8.3" cy="5.2" r="0.6" fill="#535353"/></svg>
<svg class="a" style="left:1236px;top:468px;" width="26" height="15" viewBox="0 0 26 15"><defs><pattern id="chk" width="8" height="8" patternUnits="userSpaceOnUse"><rect width="8" height="8" fill="#fff"/><rect width="4" height="4" fill="#d8d8d8"/><rect x="4" y="4" width="4" height="4" fill="#d8d8d8"/></pattern></defs><rect x="0" y="0" width="26" height="15" fill="#fff"/><rect x="0.5" y="0.5" width="25" height="14" fill="none" stroke="#2e2e2e" stroke-width="1"/></svg>
<span id="t63" class="t" style="left:1269px;top:471.84px;font-size:8.7px;color:#e2e2e2;transform:scaleX(0.9704);">Background</span>
<svg class="a" style="left:1429px;top:879px;" width="15" height="9" viewBox="0 0 15 9"><rect x="1" y="1.5" width="6.5" height="6" rx="3" fill="none" stroke="#8e8e8e" stroke-width="1.3"/><rect x="7" y="1.5" width="6.5" height="6" rx="3" fill="none" stroke="#8e8e8e" stroke-width="1.3"/><path d="M4 4.5h7" stroke="#8e8e8e" stroke-width="1.3"/></svg>
<span id="t64" class="t" style="left:1453px;top:879.69px;font-size:11px;color:#d8d8d8;"><i>fx</i></span>
<svg class="a" style="left:1463px;top:890px;" width="5" height="3" viewBox="0 0 5 3"><path d="M0 0h5L2.5 2.5z" fill="#e0e0e0"/></svg>
<svg class="a" style="left:1474px;top:879px;" width="13" height="10" viewBox="0 0 13 10"><rect x="0.5" y="0.5" width="12" height="9" fill="#dcdcdc"/><circle cx="6.5" cy="5" r="2.6" fill="#444"/></svg>
<svg class="a" style="left:1497px;top:878px;" width="13" height="12" viewBox="0 0 13 12"><circle cx="6" cy="6" r="5" fill="none" stroke="#dcdcdc" stroke-width="1.3"/><path d="M9.5 2.5L2.5 9.5a5 5 0 0 0 7-7z" fill="#dcdcdc"/></svg>
<svg class="a" style="left:1508px;top:890px;" width="5" height="3" viewBox="0 0 5 3"><path d="M0 0h5L2.5 2.5z" fill="#e0e0e0"/></svg>
<svg class="a" style="left:1519px;top:879px;" width="14" height="11" viewBox="0 0 14 11"><path d="M0.5 2h5l1 1.5h7V10.5h-13z" fill="#dcdcdc"/><rect x="0.5" y="0.5" width="5" height="1" fill="#dcdcdc"/></svg>
<svg class="a" style="left:1542px;top:878px;" width="13" height="12" viewBox="0 0 13 12"><rect x="1" y="1" width="11" height="10" fill="none" stroke="#dcdcdc" stroke-width="1.2"/><path d="M6.5 3v6M3.5 6h6" stroke="#dcdcdc" stroke-width="1.4"/></svg>
<svg class="a" style="left:1565px;top:877px;" width="13" height="13" viewBox="0 0 13 13"><path d="M1 3h11M4.5 3V1.5h4V3" fill="none" stroke="#dcdcdc" stroke-width="1.1"/><path d="M2.5 4h8v8.5h-8z" fill="none" stroke="#dcdcdc" stroke-width="1.2"/><path d="M5 5.5v5.5M8 5.5v5.5" stroke="#dcdcdc" stroke-width="1"/></svg>
<div class="a" style="left:1204px;top:58px;width:3px;height:837px;background:#3e3e3e;"></div>
<div class="a" style="left:1171px;top:49px;width:2px;height:846px;background:#3e3e3e;"></div>
<div class="a" style="left:33px;top:49px;width:2px;height:846px;background:#3e3e3e;"></div>
</body></html>
